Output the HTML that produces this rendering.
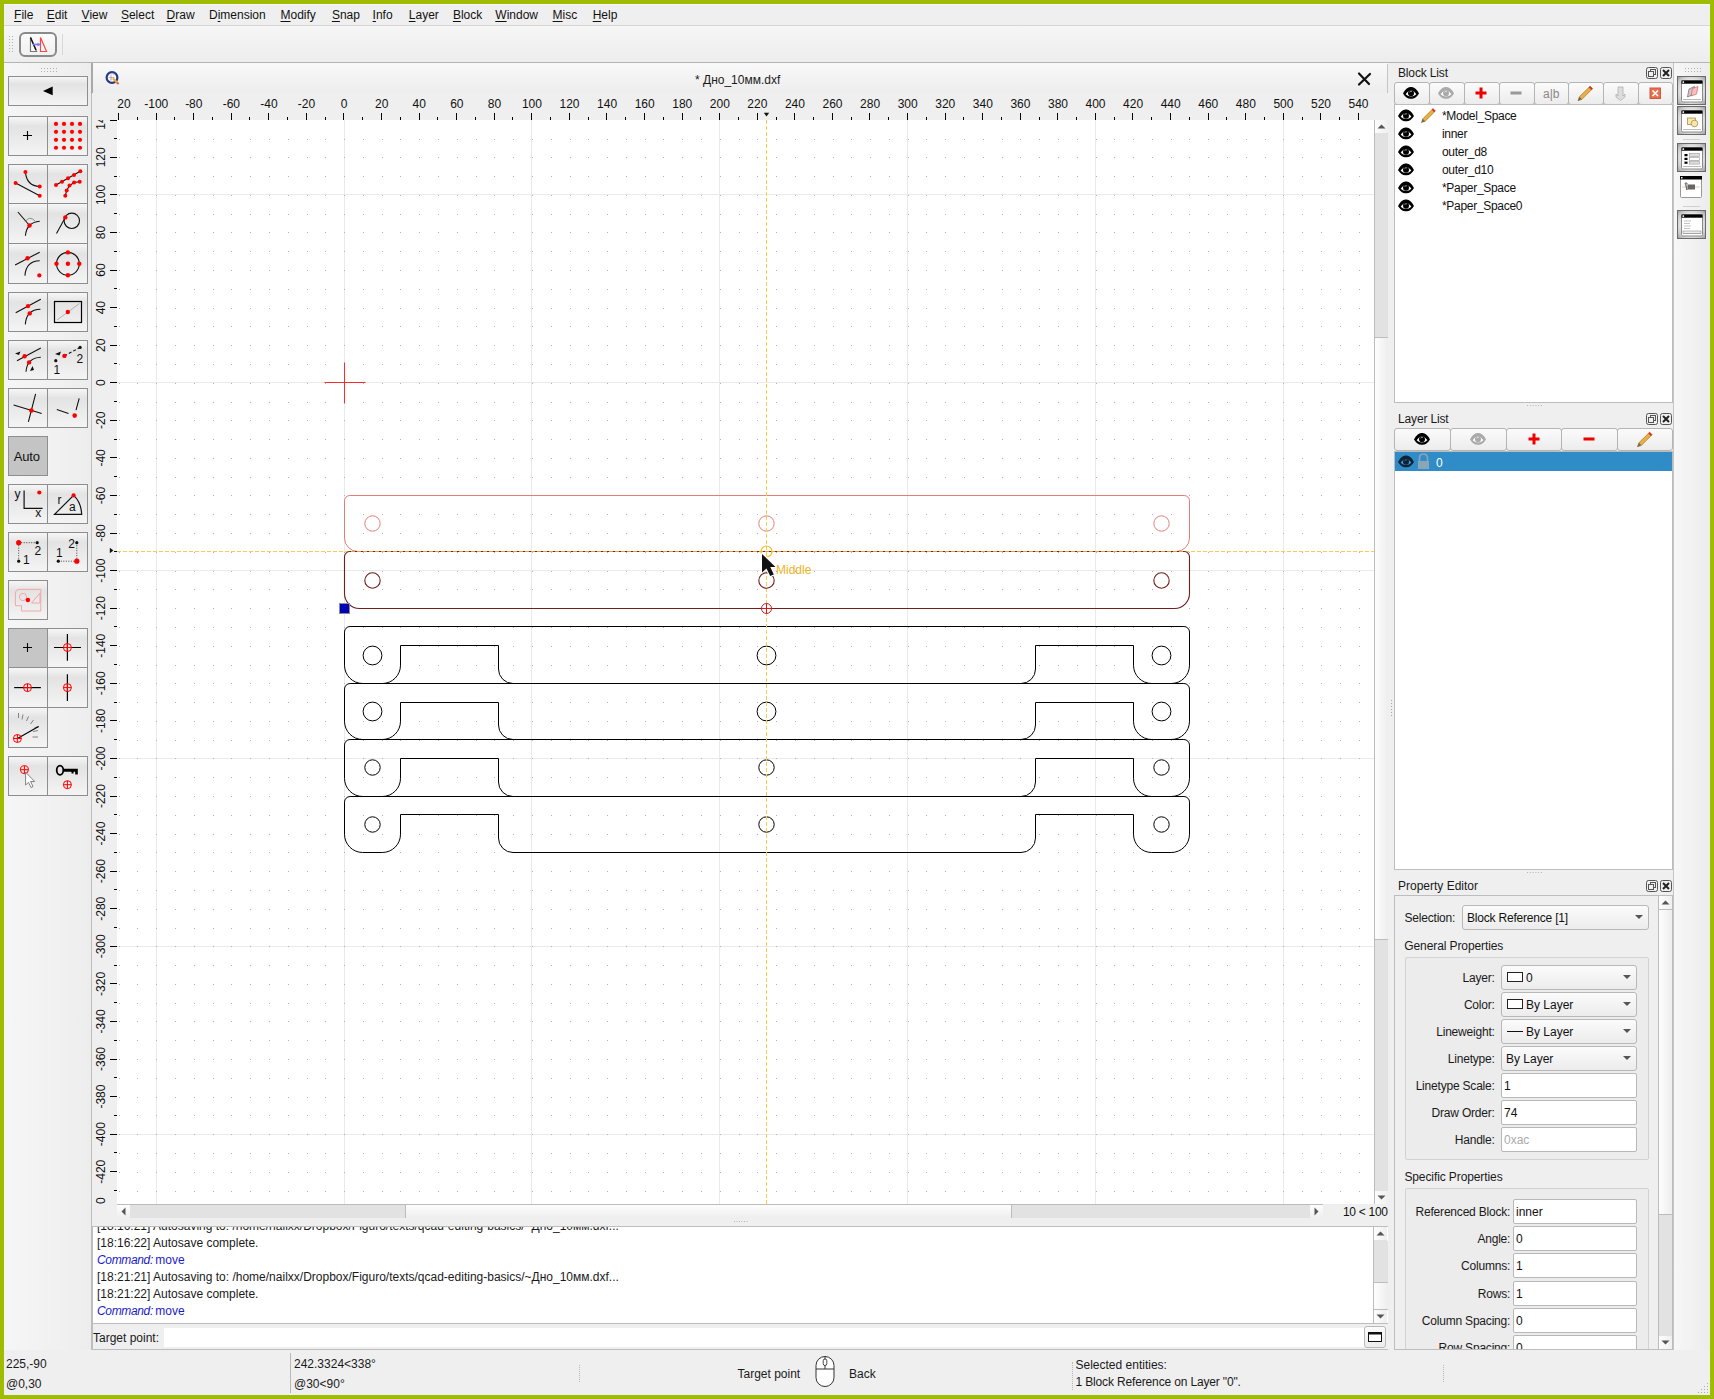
<!DOCTYPE html><html><head><meta charset="utf-8"><style>
*{box-sizing:border-box}
html,body{margin:0;padding:0}
body{width:1714px;height:1399px;overflow:hidden;position:relative;background:#a0bc00;font-family:"Liberation Sans",sans-serif;font-size:12px;color:#1a1a1a}
.a{position:absolute}
.t{position:absolute;white-space:nowrap;line-height:14px}
.u{text-decoration:underline;text-underline-offset:2px}
.tb{position:absolute;border:1px solid #8e8e8e;background:linear-gradient(#f6f6f6,#e3e3e3 25%,#ebebeb 60%,#f4f4f4)}
.tbp{position:absolute;border:1px solid #8e8e8e;background:#c6c6c6}
.btn{position:absolute;border:1px solid #b9b9b9;border-radius:3px;background:linear-gradient(#fbfbfb,#ececec)}
.inp{position:absolute;border:1px solid #b9b9b9;border-radius:2px;background:#fff}
svg{position:absolute;overflow:visible}
</style></head><body>
<div class="a" style="left:4px;top:4px;width:1706px;height:1391px;background:#efefef"></div>
<div class="a" style="left:4px;top:4px;width:1706px;height:1px;background:#f7f7f9"></div>
<div class="t" style="left:14.1px;top:8px;color:#111"><span class="u">F</span>ile</div>
<div class="t" style="left:46.7px;top:8px;color:#111"><span class="u">E</span>dit</div>
<div class="t" style="left:81.6px;top:8px;color:#111"><span class="u">V</span>iew</div>
<div class="t" style="left:120.9px;top:8px;color:#111"><span class="u">S</span>elect</div>
<div class="t" style="left:166.6px;top:8px;color:#111"><span class="u">D</span>raw</div>
<div class="t" style="left:209px;top:8px;color:#111">D<span class="u">i</span>mension</div>
<div class="t" style="left:280.5px;top:8px;color:#111"><span class="u">M</span>odify</div>
<div class="t" style="left:331.9px;top:8px;color:#111"><span class="u">S</span>nap</div>
<div class="t" style="left:372.6px;top:8px;color:#111"><span class="u">I</span>nfo</div>
<div class="t" style="left:408.8px;top:8px;color:#111"><span class="u">L</span>ayer</div>
<div class="t" style="left:452.9px;top:8px;color:#111"><span class="u">B</span>lock</div>
<div class="t" style="left:495.3px;top:8px;color:#111"><span class="u">W</span>indow</div>
<div class="t" style="left:552.6px;top:8px;color:#111"><span class="u">M</span>isc</div>
<div class="t" style="left:592.7px;top:8px;color:#111"><span class="u">H</span>elp</div>
<div class="a" style="left:4px;top:25px;width:1706px;height:1px;background:#d6d6d6"></div>
<div class="a" style="left:4px;top:26px;width:1706px;height:36px;background:linear-gradient(#f6f6f6,#ededed)"></div>
<div class="a" style="left:4px;top:62px;width:1706px;height:1px;background:#b4b4b4"></div>
<div class="a" style="left:4px;top:63px;width:87px;height:1287px;background:linear-gradient(90deg,#f6f6f6,#ededed)"></div>
<div class="a" style="left:91px;top:63px;width:1px;height:1287px;background:#bdbdbd"></div>
<div class="a" style="left:92px;top:63px;width:1296px;height:30px;background:linear-gradient(#f9f9f9,#ededed)"></div>
<div class="a" style="left:1387px;top:64px;width:1px;height:30px;background:#c4c4c4"></div>
<div class="a" style="left:91px;top:63px;width:2px;height:31px;background:#a9a9a9"></div>
<div class="t" style="left:695px;top:73px;color:#1a1a1a">* Дно_10мм.dxf</div>
<svg style="left:1356px;top:71px" width="17" height="16" viewBox="0 0 17 16"><path d="M3 2.5 L13 13 M14 3 L3 13.5" stroke="#111" stroke-width="2.2" stroke-linecap="round" fill="none"/></svg>
<svg style="left:104px;top:69px" width="18" height="18" viewBox="0 0 18 18"><circle cx="8" cy="8.5" r="5.4" fill="#fafafa" stroke="#26388a" stroke-width="2.2"/><path d="M4.5 8.5h6M7 5.5v6" stroke="#999" stroke-width="0.7"/><path d="M6 11.5l2-2M9 6l1.5-1" stroke="#e88" stroke-width="0.7"/><path d="M9 9.5L13.2 13.7" stroke="#f0b020" stroke-width="2.2"/><path d="M12.8 13.3L14.6 15.1" stroke="#e06060" stroke-width="2"/></svg>
<div class="a" style="left:92px;top:93px;width:1296px;height:27px;background:#efefef"></div>
<div class="a" style="left:92px;top:120px;width:25px;height:1084px;background:#efefef"></div>
<svg style="left:117px;top:93px;overflow:hidden;" width="1271" height="27" viewBox="117 93 1271 27"><path d="M118.5 113V120M137.5 117V120M156.5 113V120M174.5 117V120M193.5 113V120M212.5 117V120M231.5 113V120M249.5 117V120M268.5 113V120M287.5 117V120M306.5 113V120M325.5 117V120M343.5 113V120M362.5 117V120M381.5 113V120M400.5 117V120M419.5 113V120M437.5 117V120M456.5 113V120M475.5 117V120M494.5 113V120M512.5 117V120M531.5 113V120M550.5 117V120M569.5 113V120M588.5 117V120M606.5 113V120M625.5 117V120M644.5 113V120M663.5 117V120M682.5 113V120M700.5 117V120M719.5 113V120M738.5 117V120M757.5 113V120M776.5 117V120M794.5 113V120M813.5 117V120M832.5 113V120M851.5 117V120M869.5 113V120M888.5 117V120M907.5 113V120M926.5 117V120M945.5 113V120M963.5 117V120M982.5 113V120M1001.5 117V120M1020.5 113V120M1039.5 117V120M1057.5 113V120M1076.5 117V120M1095.5 113V120M1114.5 117V120M1132.5 113V120M1151.5 117V120M1170.5 113V120M1189.5 117V120M1208.5 113V120M1226.5 117V120M1245.5 113V120M1264.5 117V120M1283.5 113V120M1302.5 117V120M1320.5 113V120M1339.5 117V120M1358.5 113V120" stroke="#000" stroke-width="1" fill="none"/><g font-family="Liberation Sans" font-size="12" fill="#111"><text x="118.67" y="108" text-anchor="middle">-120</text><text x="156.24" y="108" text-anchor="middle">-100</text><text x="193.81" y="108" text-anchor="middle">-80</text><text x="231.38" y="108" text-anchor="middle">-60</text><text x="268.96" y="108" text-anchor="middle">-40</text><text x="306.53" y="108" text-anchor="middle">-20</text><text x="344.1" y="108" text-anchor="middle">0</text><text x="381.67" y="108" text-anchor="middle">20</text><text x="419.24" y="108" text-anchor="middle">40</text><text x="456.82" y="108" text-anchor="middle">60</text><text x="494.39" y="108" text-anchor="middle">80</text><text x="531.96" y="108" text-anchor="middle">100</text><text x="569.53" y="108" text-anchor="middle">120</text><text x="607.1" y="108" text-anchor="middle">140</text><text x="644.68" y="108" text-anchor="middle">160</text><text x="682.25" y="108" text-anchor="middle">180</text><text x="719.82" y="108" text-anchor="middle">200</text><text x="757.39" y="108" text-anchor="middle">220</text><text x="794.96" y="108" text-anchor="middle">240</text><text x="832.54" y="108" text-anchor="middle">260</text><text x="870.11" y="108" text-anchor="middle">280</text><text x="907.68" y="108" text-anchor="middle">300</text><text x="945.25" y="108" text-anchor="middle">320</text><text x="982.82" y="108" text-anchor="middle">340</text><text x="1020.4" y="108" text-anchor="middle">360</text><text x="1057.97" y="108" text-anchor="middle">380</text><text x="1095.54" y="108" text-anchor="middle">400</text><text x="1133.11" y="108" text-anchor="middle">420</text><text x="1170.68" y="108" text-anchor="middle">440</text><text x="1208.26" y="108" text-anchor="middle">460</text><text x="1245.83" y="108" text-anchor="middle">480</text><text x="1283.4" y="108" text-anchor="middle">500</text><text x="1320.97" y="108" text-anchor="middle">520</text><text x="1358.54" y="108" text-anchor="middle">540</text></g><path d="M763.8 112.8 h5.4 l-2.7 3.6z" fill="#111"/></svg>
<svg style="left:92px;top:120px;overflow:hidden;" width="25" height="1084" viewBox="92 120 25 1084"><path d="M110 120.5H117M114 138.5H117M110 157.5H117M114 176.5H117M110 194.5H117M114 213.5H117M110 232.5H117M114 251.5H117M110 270.5H117M114 288.5H117M110 307.5H117M114 326.5H117M110 345.5H117M114 363.5H117M110 382.5H117M114 401.5H117M110 420.5H117M114 439.5H117M110 457.5H117M114 476.5H117M110 495.5H117M114 514.5H117M110 533.5H117M114 551.5H117M110 570.5H117M114 589.5H117M110 608.5H117M114 626.5H117M110 645.5H117M114 664.5H117M110 683.5H117M114 702.5H117M110 720.5H117M114 739.5H117M110 758.5H117M114 777.5H117M110 796.5H117M114 814.5H117M110 833.5H117M114 852.5H117M110 871.5H117M114 889.5H117M110 908.5H117M114 927.5H117M110 946.5H117M114 965.5H117M110 983.5H117M114 1002.5H117M110 1021.5H117M114 1040.5H117M110 1059.5H117M114 1077.5H117M110 1096.5H117M114 1115.5H117M110 1134.5H117M114 1152.5H117M110 1171.5H117M114 1190.5H117" stroke="#000" stroke-width="1" fill="none"/><g font-family="Liberation Sans" font-size="12" fill="#111"><text x="105" y="119.77" transform="rotate(-90 105 119.77)" text-anchor="middle">140</text><text x="105" y="157.34" transform="rotate(-90 105 157.34)" text-anchor="middle">120</text><text x="105" y="194.91" transform="rotate(-90 105 194.91)" text-anchor="middle">100</text><text x="105" y="232.48" transform="rotate(-90 105 232.48)" text-anchor="middle">80</text><text x="105" y="270.05" transform="rotate(-90 105 270.05)" text-anchor="middle">60</text><text x="105" y="307.62" transform="rotate(-90 105 307.62)" text-anchor="middle">40</text><text x="105" y="345.19" transform="rotate(-90 105 345.19)" text-anchor="middle">20</text><text x="105" y="382.76" transform="rotate(-90 105 382.76)" text-anchor="middle">0</text><text x="105" y="420.33" transform="rotate(-90 105 420.33)" text-anchor="middle">-20</text><text x="105" y="457.9" transform="rotate(-90 105 457.9)" text-anchor="middle">-40</text><text x="105" y="495.47" transform="rotate(-90 105 495.47)" text-anchor="middle">-60</text><text x="105" y="533.04" transform="rotate(-90 105 533.04)" text-anchor="middle">-80</text><text x="105" y="570.61" transform="rotate(-90 105 570.61)" text-anchor="middle">-100</text><text x="105" y="608.18" transform="rotate(-90 105 608.18)" text-anchor="middle">-120</text><text x="105" y="645.75" transform="rotate(-90 105 645.75)" text-anchor="middle">-140</text><text x="105" y="683.32" transform="rotate(-90 105 683.32)" text-anchor="middle">-160</text><text x="105" y="720.89" transform="rotate(-90 105 720.89)" text-anchor="middle">-180</text><text x="105" y="758.46" transform="rotate(-90 105 758.46)" text-anchor="middle">-200</text><text x="105" y="796.03" transform="rotate(-90 105 796.03)" text-anchor="middle">-220</text><text x="105" y="833.6" transform="rotate(-90 105 833.6)" text-anchor="middle">-240</text><text x="105" y="871.17" transform="rotate(-90 105 871.17)" text-anchor="middle">-260</text><text x="105" y="908.74" transform="rotate(-90 105 908.74)" text-anchor="middle">-280</text><text x="105" y="946.31" transform="rotate(-90 105 946.31)" text-anchor="middle">-300</text><text x="105" y="983.88" transform="rotate(-90 105 983.88)" text-anchor="middle">-320</text><text x="105" y="1021.45" transform="rotate(-90 105 1021.45)" text-anchor="middle">-340</text><text x="105" y="1059.02" transform="rotate(-90 105 1059.02)" text-anchor="middle">-360</text><text x="105" y="1096.59" transform="rotate(-90 105 1096.59)" text-anchor="middle">-380</text><text x="105" y="1134.16" transform="rotate(-90 105 1134.16)" text-anchor="middle">-400</text><text x="105" y="1171.73" transform="rotate(-90 105 1171.73)" text-anchor="middle">-420</text><text x="105" y="1209.3" transform="rotate(-90 105 1209.3)" text-anchor="middle">-440</text></g><path d="M109.8 547.8 v5.4 l3.6 -2.7z" fill="#111"/></svg>
<svg style="left:117px;top:120px;overflow:hidden;" width="1257" height="1084" viewBox="117 120 1257 1084"><rect x="117" y="120" width="1257" height="1084" fill="#fff"/><path d="M156.5 120V1204M344.5 120V1204M531.5 120V1204M719.5 120V1204M907.5 120V1204M1095.5 120V1204M1283.5 120V1204M117 194.5H1374M117 382.5H1374M117 570.5H1374M117 758.5H1374M117 946.5H1374M117 1134.5H1374" stroke="#eaeaea" stroke-width="1" fill="none"/><path d="M119 139h1v1h-1zM137 139h1v1h-1zM156 139h1v1h-1zM175 139h1v1h-1zM194 139h1v1h-1zM213 139h1v1h-1zM231 139h1v1h-1zM250 139h1v1h-1zM269 139h1v1h-1zM288 139h1v1h-1zM307 139h1v1h-1zM325 139h1v1h-1zM344 139h1v1h-1zM363 139h1v1h-1zM382 139h1v1h-1zM400 139h1v1h-1zM419 139h1v1h-1zM438 139h1v1h-1zM457 139h1v1h-1zM476 139h1v1h-1zM494 139h1v1h-1zM513 139h1v1h-1zM532 139h1v1h-1zM551 139h1v1h-1zM570 139h1v1h-1zM588 139h1v1h-1zM607 139h1v1h-1zM626 139h1v1h-1zM645 139h1v1h-1zM663 139h1v1h-1zM682 139h1v1h-1zM701 139h1v1h-1zM720 139h1v1h-1zM739 139h1v1h-1zM757 139h1v1h-1zM776 139h1v1h-1zM795 139h1v1h-1zM814 139h1v1h-1zM833 139h1v1h-1zM851 139h1v1h-1zM870 139h1v1h-1zM889 139h1v1h-1zM908 139h1v1h-1zM926 139h1v1h-1zM945 139h1v1h-1zM964 139h1v1h-1zM983 139h1v1h-1zM1002 139h1v1h-1zM1020 139h1v1h-1zM1039 139h1v1h-1zM1058 139h1v1h-1zM1077 139h1v1h-1zM1096 139h1v1h-1zM1114 139h1v1h-1zM1133 139h1v1h-1zM1152 139h1v1h-1zM1171 139h1v1h-1zM1189 139h1v1h-1zM1208 139h1v1h-1zM1227 139h1v1h-1zM1246 139h1v1h-1zM1265 139h1v1h-1zM1283 139h1v1h-1zM1302 139h1v1h-1zM1321 139h1v1h-1zM1340 139h1v1h-1zM1359 139h1v1h-1zM119 157h1v1h-1zM137 157h1v1h-1zM156 157h1v1h-1zM175 157h1v1h-1zM194 157h1v1h-1zM213 157h1v1h-1zM231 157h1v1h-1zM250 157h1v1h-1zM269 157h1v1h-1zM288 157h1v1h-1zM307 157h1v1h-1zM325 157h1v1h-1zM344 157h1v1h-1zM363 157h1v1h-1zM382 157h1v1h-1zM400 157h1v1h-1zM419 157h1v1h-1zM438 157h1v1h-1zM457 157h1v1h-1zM476 157h1v1h-1zM494 157h1v1h-1zM513 157h1v1h-1zM532 157h1v1h-1zM551 157h1v1h-1zM570 157h1v1h-1zM588 157h1v1h-1zM607 157h1v1h-1zM626 157h1v1h-1zM645 157h1v1h-1zM663 157h1v1h-1zM682 157h1v1h-1zM701 157h1v1h-1zM720 157h1v1h-1zM739 157h1v1h-1zM757 157h1v1h-1zM776 157h1v1h-1zM795 157h1v1h-1zM814 157h1v1h-1zM833 157h1v1h-1zM851 157h1v1h-1zM870 157h1v1h-1zM889 157h1v1h-1zM908 157h1v1h-1zM926 157h1v1h-1zM945 157h1v1h-1zM964 157h1v1h-1zM983 157h1v1h-1zM1002 157h1v1h-1zM1020 157h1v1h-1zM1039 157h1v1h-1zM1058 157h1v1h-1zM1077 157h1v1h-1zM1096 157h1v1h-1zM1114 157h1v1h-1zM1133 157h1v1h-1zM1152 157h1v1h-1zM1171 157h1v1h-1zM1189 157h1v1h-1zM1208 157h1v1h-1zM1227 157h1v1h-1zM1246 157h1v1h-1zM1265 157h1v1h-1zM1283 157h1v1h-1zM1302 157h1v1h-1zM1321 157h1v1h-1zM1340 157h1v1h-1zM1359 157h1v1h-1zM119 176h1v1h-1zM137 176h1v1h-1zM156 176h1v1h-1zM175 176h1v1h-1zM194 176h1v1h-1zM213 176h1v1h-1zM231 176h1v1h-1zM250 176h1v1h-1zM269 176h1v1h-1zM288 176h1v1h-1zM307 176h1v1h-1zM325 176h1v1h-1zM344 176h1v1h-1zM363 176h1v1h-1zM382 176h1v1h-1zM400 176h1v1h-1zM419 176h1v1h-1zM438 176h1v1h-1zM457 176h1v1h-1zM476 176h1v1h-1zM494 176h1v1h-1zM513 176h1v1h-1zM532 176h1v1h-1zM551 176h1v1h-1zM570 176h1v1h-1zM588 176h1v1h-1zM607 176h1v1h-1zM626 176h1v1h-1zM645 176h1v1h-1zM663 176h1v1h-1zM682 176h1v1h-1zM701 176h1v1h-1zM720 176h1v1h-1zM739 176h1v1h-1zM757 176h1v1h-1zM776 176h1v1h-1zM795 176h1v1h-1zM814 176h1v1h-1zM833 176h1v1h-1zM851 176h1v1h-1zM870 176h1v1h-1zM889 176h1v1h-1zM908 176h1v1h-1zM926 176h1v1h-1zM945 176h1v1h-1zM964 176h1v1h-1zM983 176h1v1h-1zM1002 176h1v1h-1zM1020 176h1v1h-1zM1039 176h1v1h-1zM1058 176h1v1h-1zM1077 176h1v1h-1zM1096 176h1v1h-1zM1114 176h1v1h-1zM1133 176h1v1h-1zM1152 176h1v1h-1zM1171 176h1v1h-1zM1189 176h1v1h-1zM1208 176h1v1h-1zM1227 176h1v1h-1zM1246 176h1v1h-1zM1265 176h1v1h-1zM1283 176h1v1h-1zM1302 176h1v1h-1zM1321 176h1v1h-1zM1340 176h1v1h-1zM1359 176h1v1h-1zM119 195h1v1h-1zM137 195h1v1h-1zM156 195h1v1h-1zM175 195h1v1h-1zM194 195h1v1h-1zM213 195h1v1h-1zM231 195h1v1h-1zM250 195h1v1h-1zM269 195h1v1h-1zM288 195h1v1h-1zM307 195h1v1h-1zM325 195h1v1h-1zM344 195h1v1h-1zM363 195h1v1h-1zM382 195h1v1h-1zM400 195h1v1h-1zM419 195h1v1h-1zM438 195h1v1h-1zM457 195h1v1h-1zM476 195h1v1h-1zM494 195h1v1h-1zM513 195h1v1h-1zM532 195h1v1h-1zM551 195h1v1h-1zM570 195h1v1h-1zM588 195h1v1h-1zM607 195h1v1h-1zM626 195h1v1h-1zM645 195h1v1h-1zM663 195h1v1h-1zM682 195h1v1h-1zM701 195h1v1h-1zM720 195h1v1h-1zM739 195h1v1h-1zM757 195h1v1h-1zM776 195h1v1h-1zM795 195h1v1h-1zM814 195h1v1h-1zM833 195h1v1h-1zM851 195h1v1h-1zM870 195h1v1h-1zM889 195h1v1h-1zM908 195h1v1h-1zM926 195h1v1h-1zM945 195h1v1h-1zM964 195h1v1h-1zM983 195h1v1h-1zM1002 195h1v1h-1zM1020 195h1v1h-1zM1039 195h1v1h-1zM1058 195h1v1h-1zM1077 195h1v1h-1zM1096 195h1v1h-1zM1114 195h1v1h-1zM1133 195h1v1h-1zM1152 195h1v1h-1zM1171 195h1v1h-1zM1189 195h1v1h-1zM1208 195h1v1h-1zM1227 195h1v1h-1zM1246 195h1v1h-1zM1265 195h1v1h-1zM1283 195h1v1h-1zM1302 195h1v1h-1zM1321 195h1v1h-1zM1340 195h1v1h-1zM1359 195h1v1h-1zM119 214h1v1h-1zM137 214h1v1h-1zM156 214h1v1h-1zM175 214h1v1h-1zM194 214h1v1h-1zM213 214h1v1h-1zM231 214h1v1h-1zM250 214h1v1h-1zM269 214h1v1h-1zM288 214h1v1h-1zM307 214h1v1h-1zM325 214h1v1h-1zM344 214h1v1h-1zM363 214h1v1h-1zM382 214h1v1h-1zM400 214h1v1h-1zM419 214h1v1h-1zM438 214h1v1h-1zM457 214h1v1h-1zM476 214h1v1h-1zM494 214h1v1h-1zM513 214h1v1h-1zM532 214h1v1h-1zM551 214h1v1h-1zM570 214h1v1h-1zM588 214h1v1h-1zM607 214h1v1h-1zM626 214h1v1h-1zM645 214h1v1h-1zM663 214h1v1h-1zM682 214h1v1h-1zM701 214h1v1h-1zM720 214h1v1h-1zM739 214h1v1h-1zM757 214h1v1h-1zM776 214h1v1h-1zM795 214h1v1h-1zM814 214h1v1h-1zM833 214h1v1h-1zM851 214h1v1h-1zM870 214h1v1h-1zM889 214h1v1h-1zM908 214h1v1h-1zM926 214h1v1h-1zM945 214h1v1h-1zM964 214h1v1h-1zM983 214h1v1h-1zM1002 214h1v1h-1zM1020 214h1v1h-1zM1039 214h1v1h-1zM1058 214h1v1h-1zM1077 214h1v1h-1zM1096 214h1v1h-1zM1114 214h1v1h-1zM1133 214h1v1h-1zM1152 214h1v1h-1zM1171 214h1v1h-1zM1189 214h1v1h-1zM1208 214h1v1h-1zM1227 214h1v1h-1zM1246 214h1v1h-1zM1265 214h1v1h-1zM1283 214h1v1h-1zM1302 214h1v1h-1zM1321 214h1v1h-1zM1340 214h1v1h-1zM1359 214h1v1h-1zM119 232h1v1h-1zM137 232h1v1h-1zM156 232h1v1h-1zM175 232h1v1h-1zM194 232h1v1h-1zM213 232h1v1h-1zM231 232h1v1h-1zM250 232h1v1h-1zM269 232h1v1h-1zM288 232h1v1h-1zM307 232h1v1h-1zM325 232h1v1h-1zM344 232h1v1h-1zM363 232h1v1h-1zM382 232h1v1h-1zM400 232h1v1h-1zM419 232h1v1h-1zM438 232h1v1h-1zM457 232h1v1h-1zM476 232h1v1h-1zM494 232h1v1h-1zM513 232h1v1h-1zM532 232h1v1h-1zM551 232h1v1h-1zM570 232h1v1h-1zM588 232h1v1h-1zM607 232h1v1h-1zM626 232h1v1h-1zM645 232h1v1h-1zM663 232h1v1h-1zM682 232h1v1h-1zM701 232h1v1h-1zM720 232h1v1h-1zM739 232h1v1h-1zM757 232h1v1h-1zM776 232h1v1h-1zM795 232h1v1h-1zM814 232h1v1h-1zM833 232h1v1h-1zM851 232h1v1h-1zM870 232h1v1h-1zM889 232h1v1h-1zM908 232h1v1h-1zM926 232h1v1h-1zM945 232h1v1h-1zM964 232h1v1h-1zM983 232h1v1h-1zM1002 232h1v1h-1zM1020 232h1v1h-1zM1039 232h1v1h-1zM1058 232h1v1h-1zM1077 232h1v1h-1zM1096 232h1v1h-1zM1114 232h1v1h-1zM1133 232h1v1h-1zM1152 232h1v1h-1zM1171 232h1v1h-1zM1189 232h1v1h-1zM1208 232h1v1h-1zM1227 232h1v1h-1zM1246 232h1v1h-1zM1265 232h1v1h-1zM1283 232h1v1h-1zM1302 232h1v1h-1zM1321 232h1v1h-1zM1340 232h1v1h-1zM1359 232h1v1h-1zM119 251h1v1h-1zM137 251h1v1h-1zM156 251h1v1h-1zM175 251h1v1h-1zM194 251h1v1h-1zM213 251h1v1h-1zM231 251h1v1h-1zM250 251h1v1h-1zM269 251h1v1h-1zM288 251h1v1h-1zM307 251h1v1h-1zM325 251h1v1h-1zM344 251h1v1h-1zM363 251h1v1h-1zM382 251h1v1h-1zM400 251h1v1h-1zM419 251h1v1h-1zM438 251h1v1h-1zM457 251h1v1h-1zM476 251h1v1h-1zM494 251h1v1h-1zM513 251h1v1h-1zM532 251h1v1h-1zM551 251h1v1h-1zM570 251h1v1h-1zM588 251h1v1h-1zM607 251h1v1h-1zM626 251h1v1h-1zM645 251h1v1h-1zM663 251h1v1h-1zM682 251h1v1h-1zM701 251h1v1h-1zM720 251h1v1h-1zM739 251h1v1h-1zM757 251h1v1h-1zM776 251h1v1h-1zM795 251h1v1h-1zM814 251h1v1h-1zM833 251h1v1h-1zM851 251h1v1h-1zM870 251h1v1h-1zM889 251h1v1h-1zM908 251h1v1h-1zM926 251h1v1h-1zM945 251h1v1h-1zM964 251h1v1h-1zM983 251h1v1h-1zM1002 251h1v1h-1zM1020 251h1v1h-1zM1039 251h1v1h-1zM1058 251h1v1h-1zM1077 251h1v1h-1zM1096 251h1v1h-1zM1114 251h1v1h-1zM1133 251h1v1h-1zM1152 251h1v1h-1zM1171 251h1v1h-1zM1189 251h1v1h-1zM1208 251h1v1h-1zM1227 251h1v1h-1zM1246 251h1v1h-1zM1265 251h1v1h-1zM1283 251h1v1h-1zM1302 251h1v1h-1zM1321 251h1v1h-1zM1340 251h1v1h-1zM1359 251h1v1h-1zM119 270h1v1h-1zM137 270h1v1h-1zM156 270h1v1h-1zM175 270h1v1h-1zM194 270h1v1h-1zM213 270h1v1h-1zM231 270h1v1h-1zM250 270h1v1h-1zM269 270h1v1h-1zM288 270h1v1h-1zM307 270h1v1h-1zM325 270h1v1h-1zM344 270h1v1h-1zM363 270h1v1h-1zM382 270h1v1h-1zM400 270h1v1h-1zM419 270h1v1h-1zM438 270h1v1h-1zM457 270h1v1h-1zM476 270h1v1h-1zM494 270h1v1h-1zM513 270h1v1h-1zM532 270h1v1h-1zM551 270h1v1h-1zM570 270h1v1h-1zM588 270h1v1h-1zM607 270h1v1h-1zM626 270h1v1h-1zM645 270h1v1h-1zM663 270h1v1h-1zM682 270h1v1h-1zM701 270h1v1h-1zM720 270h1v1h-1zM739 270h1v1h-1zM757 270h1v1h-1zM776 270h1v1h-1zM795 270h1v1h-1zM814 270h1v1h-1zM833 270h1v1h-1zM851 270h1v1h-1zM870 270h1v1h-1zM889 270h1v1h-1zM908 270h1v1h-1zM926 270h1v1h-1zM945 270h1v1h-1zM964 270h1v1h-1zM983 270h1v1h-1zM1002 270h1v1h-1zM1020 270h1v1h-1zM1039 270h1v1h-1zM1058 270h1v1h-1zM1077 270h1v1h-1zM1096 270h1v1h-1zM1114 270h1v1h-1zM1133 270h1v1h-1zM1152 270h1v1h-1zM1171 270h1v1h-1zM1189 270h1v1h-1zM1208 270h1v1h-1zM1227 270h1v1h-1zM1246 270h1v1h-1zM1265 270h1v1h-1zM1283 270h1v1h-1zM1302 270h1v1h-1zM1321 270h1v1h-1zM1340 270h1v1h-1zM1359 270h1v1h-1zM119 289h1v1h-1zM137 289h1v1h-1zM156 289h1v1h-1zM175 289h1v1h-1zM194 289h1v1h-1zM213 289h1v1h-1zM231 289h1v1h-1zM250 289h1v1h-1zM269 289h1v1h-1zM288 289h1v1h-1zM307 289h1v1h-1zM325 289h1v1h-1zM344 289h1v1h-1zM363 289h1v1h-1zM382 289h1v1h-1zM400 289h1v1h-1zM419 289h1v1h-1zM438 289h1v1h-1zM457 289h1v1h-1zM476 289h1v1h-1zM494 289h1v1h-1zM513 289h1v1h-1zM532 289h1v1h-1zM551 289h1v1h-1zM570 289h1v1h-1zM588 289h1v1h-1zM607 289h1v1h-1zM626 289h1v1h-1zM645 289h1v1h-1zM663 289h1v1h-1zM682 289h1v1h-1zM701 289h1v1h-1zM720 289h1v1h-1zM739 289h1v1h-1zM757 289h1v1h-1zM776 289h1v1h-1zM795 289h1v1h-1zM814 289h1v1h-1zM833 289h1v1h-1zM851 289h1v1h-1zM870 289h1v1h-1zM889 289h1v1h-1zM908 289h1v1h-1zM926 289h1v1h-1zM945 289h1v1h-1zM964 289h1v1h-1zM983 289h1v1h-1zM1002 289h1v1h-1zM1020 289h1v1h-1zM1039 289h1v1h-1zM1058 289h1v1h-1zM1077 289h1v1h-1zM1096 289h1v1h-1zM1114 289h1v1h-1zM1133 289h1v1h-1zM1152 289h1v1h-1zM1171 289h1v1h-1zM1189 289h1v1h-1zM1208 289h1v1h-1zM1227 289h1v1h-1zM1246 289h1v1h-1zM1265 289h1v1h-1zM1283 289h1v1h-1zM1302 289h1v1h-1zM1321 289h1v1h-1zM1340 289h1v1h-1zM1359 289h1v1h-1zM119 308h1v1h-1zM137 308h1v1h-1zM156 308h1v1h-1zM175 308h1v1h-1zM194 308h1v1h-1zM213 308h1v1h-1zM231 308h1v1h-1zM250 308h1v1h-1zM269 308h1v1h-1zM288 308h1v1h-1zM307 308h1v1h-1zM325 308h1v1h-1zM344 308h1v1h-1zM363 308h1v1h-1zM382 308h1v1h-1zM400 308h1v1h-1zM419 308h1v1h-1zM438 308h1v1h-1zM457 308h1v1h-1zM476 308h1v1h-1zM494 308h1v1h-1zM513 308h1v1h-1zM532 308h1v1h-1zM551 308h1v1h-1zM570 308h1v1h-1zM588 308h1v1h-1zM607 308h1v1h-1zM626 308h1v1h-1zM645 308h1v1h-1zM663 308h1v1h-1zM682 308h1v1h-1zM701 308h1v1h-1zM720 308h1v1h-1zM739 308h1v1h-1zM757 308h1v1h-1zM776 308h1v1h-1zM795 308h1v1h-1zM814 308h1v1h-1zM833 308h1v1h-1zM851 308h1v1h-1zM870 308h1v1h-1zM889 308h1v1h-1zM908 308h1v1h-1zM926 308h1v1h-1zM945 308h1v1h-1zM964 308h1v1h-1zM983 308h1v1h-1zM1002 308h1v1h-1zM1020 308h1v1h-1zM1039 308h1v1h-1zM1058 308h1v1h-1zM1077 308h1v1h-1zM1096 308h1v1h-1zM1114 308h1v1h-1zM1133 308h1v1h-1zM1152 308h1v1h-1zM1171 308h1v1h-1zM1189 308h1v1h-1zM1208 308h1v1h-1zM1227 308h1v1h-1zM1246 308h1v1h-1zM1265 308h1v1h-1zM1283 308h1v1h-1zM1302 308h1v1h-1zM1321 308h1v1h-1zM1340 308h1v1h-1zM1359 308h1v1h-1zM119 326h1v1h-1zM137 326h1v1h-1zM156 326h1v1h-1zM175 326h1v1h-1zM194 326h1v1h-1zM213 326h1v1h-1zM231 326h1v1h-1zM250 326h1v1h-1zM269 326h1v1h-1zM288 326h1v1h-1zM307 326h1v1h-1zM325 326h1v1h-1zM344 326h1v1h-1zM363 326h1v1h-1zM382 326h1v1h-1zM400 326h1v1h-1zM419 326h1v1h-1zM438 326h1v1h-1zM457 326h1v1h-1zM476 326h1v1h-1zM494 326h1v1h-1zM513 326h1v1h-1zM532 326h1v1h-1zM551 326h1v1h-1zM570 326h1v1h-1zM588 326h1v1h-1zM607 326h1v1h-1zM626 326h1v1h-1zM645 326h1v1h-1zM663 326h1v1h-1zM682 326h1v1h-1zM701 326h1v1h-1zM720 326h1v1h-1zM739 326h1v1h-1zM757 326h1v1h-1zM776 326h1v1h-1zM795 326h1v1h-1zM814 326h1v1h-1zM833 326h1v1h-1zM851 326h1v1h-1zM870 326h1v1h-1zM889 326h1v1h-1zM908 326h1v1h-1zM926 326h1v1h-1zM945 326h1v1h-1zM964 326h1v1h-1zM983 326h1v1h-1zM1002 326h1v1h-1zM1020 326h1v1h-1zM1039 326h1v1h-1zM1058 326h1v1h-1zM1077 326h1v1h-1zM1096 326h1v1h-1zM1114 326h1v1h-1zM1133 326h1v1h-1zM1152 326h1v1h-1zM1171 326h1v1h-1zM1189 326h1v1h-1zM1208 326h1v1h-1zM1227 326h1v1h-1zM1246 326h1v1h-1zM1265 326h1v1h-1zM1283 326h1v1h-1zM1302 326h1v1h-1zM1321 326h1v1h-1zM1340 326h1v1h-1zM1359 326h1v1h-1zM119 345h1v1h-1zM137 345h1v1h-1zM156 345h1v1h-1zM175 345h1v1h-1zM194 345h1v1h-1zM213 345h1v1h-1zM231 345h1v1h-1zM250 345h1v1h-1zM269 345h1v1h-1zM288 345h1v1h-1zM307 345h1v1h-1zM325 345h1v1h-1zM344 345h1v1h-1zM363 345h1v1h-1zM382 345h1v1h-1zM400 345h1v1h-1zM419 345h1v1h-1zM438 345h1v1h-1zM457 345h1v1h-1zM476 345h1v1h-1zM494 345h1v1h-1zM513 345h1v1h-1zM532 345h1v1h-1zM551 345h1v1h-1zM570 345h1v1h-1zM588 345h1v1h-1zM607 345h1v1h-1zM626 345h1v1h-1zM645 345h1v1h-1zM663 345h1v1h-1zM682 345h1v1h-1zM701 345h1v1h-1zM720 345h1v1h-1zM739 345h1v1h-1zM757 345h1v1h-1zM776 345h1v1h-1zM795 345h1v1h-1zM814 345h1v1h-1zM833 345h1v1h-1zM851 345h1v1h-1zM870 345h1v1h-1zM889 345h1v1h-1zM908 345h1v1h-1zM926 345h1v1h-1zM945 345h1v1h-1zM964 345h1v1h-1zM983 345h1v1h-1zM1002 345h1v1h-1zM1020 345h1v1h-1zM1039 345h1v1h-1zM1058 345h1v1h-1zM1077 345h1v1h-1zM1096 345h1v1h-1zM1114 345h1v1h-1zM1133 345h1v1h-1zM1152 345h1v1h-1zM1171 345h1v1h-1zM1189 345h1v1h-1zM1208 345h1v1h-1zM1227 345h1v1h-1zM1246 345h1v1h-1zM1265 345h1v1h-1zM1283 345h1v1h-1zM1302 345h1v1h-1zM1321 345h1v1h-1zM1340 345h1v1h-1zM1359 345h1v1h-1zM119 364h1v1h-1zM137 364h1v1h-1zM156 364h1v1h-1zM175 364h1v1h-1zM194 364h1v1h-1zM213 364h1v1h-1zM231 364h1v1h-1zM250 364h1v1h-1zM269 364h1v1h-1zM288 364h1v1h-1zM307 364h1v1h-1zM325 364h1v1h-1zM344 364h1v1h-1zM363 364h1v1h-1zM382 364h1v1h-1zM400 364h1v1h-1zM419 364h1v1h-1zM438 364h1v1h-1zM457 364h1v1h-1zM476 364h1v1h-1zM494 364h1v1h-1zM513 364h1v1h-1zM532 364h1v1h-1zM551 364h1v1h-1zM570 364h1v1h-1zM588 364h1v1h-1zM607 364h1v1h-1zM626 364h1v1h-1zM645 364h1v1h-1zM663 364h1v1h-1zM682 364h1v1h-1zM701 364h1v1h-1zM720 364h1v1h-1zM739 364h1v1h-1zM757 364h1v1h-1zM776 364h1v1h-1zM795 364h1v1h-1zM814 364h1v1h-1zM833 364h1v1h-1zM851 364h1v1h-1zM870 364h1v1h-1zM889 364h1v1h-1zM908 364h1v1h-1zM926 364h1v1h-1zM945 364h1v1h-1zM964 364h1v1h-1zM983 364h1v1h-1zM1002 364h1v1h-1zM1020 364h1v1h-1zM1039 364h1v1h-1zM1058 364h1v1h-1zM1077 364h1v1h-1zM1096 364h1v1h-1zM1114 364h1v1h-1zM1133 364h1v1h-1zM1152 364h1v1h-1zM1171 364h1v1h-1zM1189 364h1v1h-1zM1208 364h1v1h-1zM1227 364h1v1h-1zM1246 364h1v1h-1zM1265 364h1v1h-1zM1283 364h1v1h-1zM1302 364h1v1h-1zM1321 364h1v1h-1zM1340 364h1v1h-1zM1359 364h1v1h-1zM119 383h1v1h-1zM137 383h1v1h-1zM156 383h1v1h-1zM175 383h1v1h-1zM194 383h1v1h-1zM213 383h1v1h-1zM231 383h1v1h-1zM250 383h1v1h-1zM269 383h1v1h-1zM288 383h1v1h-1zM307 383h1v1h-1zM325 383h1v1h-1zM344 383h1v1h-1zM363 383h1v1h-1zM382 383h1v1h-1zM400 383h1v1h-1zM419 383h1v1h-1zM438 383h1v1h-1zM457 383h1v1h-1zM476 383h1v1h-1zM494 383h1v1h-1zM513 383h1v1h-1zM532 383h1v1h-1zM551 383h1v1h-1zM570 383h1v1h-1zM588 383h1v1h-1zM607 383h1v1h-1zM626 383h1v1h-1zM645 383h1v1h-1zM663 383h1v1h-1zM682 383h1v1h-1zM701 383h1v1h-1zM720 383h1v1h-1zM739 383h1v1h-1zM757 383h1v1h-1zM776 383h1v1h-1zM795 383h1v1h-1zM814 383h1v1h-1zM833 383h1v1h-1zM851 383h1v1h-1zM870 383h1v1h-1zM889 383h1v1h-1zM908 383h1v1h-1zM926 383h1v1h-1zM945 383h1v1h-1zM964 383h1v1h-1zM983 383h1v1h-1zM1002 383h1v1h-1zM1020 383h1v1h-1zM1039 383h1v1h-1zM1058 383h1v1h-1zM1077 383h1v1h-1zM1096 383h1v1h-1zM1114 383h1v1h-1zM1133 383h1v1h-1zM1152 383h1v1h-1zM1171 383h1v1h-1zM1189 383h1v1h-1zM1208 383h1v1h-1zM1227 383h1v1h-1zM1246 383h1v1h-1zM1265 383h1v1h-1zM1283 383h1v1h-1zM1302 383h1v1h-1zM1321 383h1v1h-1zM1340 383h1v1h-1zM1359 383h1v1h-1zM119 402h1v1h-1zM137 402h1v1h-1zM156 402h1v1h-1zM175 402h1v1h-1zM194 402h1v1h-1zM213 402h1v1h-1zM231 402h1v1h-1zM250 402h1v1h-1zM269 402h1v1h-1zM288 402h1v1h-1zM307 402h1v1h-1zM325 402h1v1h-1zM344 402h1v1h-1zM363 402h1v1h-1zM382 402h1v1h-1zM400 402h1v1h-1zM419 402h1v1h-1zM438 402h1v1h-1zM457 402h1v1h-1zM476 402h1v1h-1zM494 402h1v1h-1zM513 402h1v1h-1zM532 402h1v1h-1zM551 402h1v1h-1zM570 402h1v1h-1zM588 402h1v1h-1zM607 402h1v1h-1zM626 402h1v1h-1zM645 402h1v1h-1zM663 402h1v1h-1zM682 402h1v1h-1zM701 402h1v1h-1zM720 402h1v1h-1zM739 402h1v1h-1zM757 402h1v1h-1zM776 402h1v1h-1zM795 402h1v1h-1zM814 402h1v1h-1zM833 402h1v1h-1zM851 402h1v1h-1zM870 402h1v1h-1zM889 402h1v1h-1zM908 402h1v1h-1zM926 402h1v1h-1zM945 402h1v1h-1zM964 402h1v1h-1zM983 402h1v1h-1zM1002 402h1v1h-1zM1020 402h1v1h-1zM1039 402h1v1h-1zM1058 402h1v1h-1zM1077 402h1v1h-1zM1096 402h1v1h-1zM1114 402h1v1h-1zM1133 402h1v1h-1zM1152 402h1v1h-1zM1171 402h1v1h-1zM1189 402h1v1h-1zM1208 402h1v1h-1zM1227 402h1v1h-1zM1246 402h1v1h-1zM1265 402h1v1h-1zM1283 402h1v1h-1zM1302 402h1v1h-1zM1321 402h1v1h-1zM1340 402h1v1h-1zM1359 402h1v1h-1zM119 420h1v1h-1zM137 420h1v1h-1zM156 420h1v1h-1zM175 420h1v1h-1zM194 420h1v1h-1zM213 420h1v1h-1zM231 420h1v1h-1zM250 420h1v1h-1zM269 420h1v1h-1zM288 420h1v1h-1zM307 420h1v1h-1zM325 420h1v1h-1zM344 420h1v1h-1zM363 420h1v1h-1zM382 420h1v1h-1zM400 420h1v1h-1zM419 420h1v1h-1zM438 420h1v1h-1zM457 420h1v1h-1zM476 420h1v1h-1zM494 420h1v1h-1zM513 420h1v1h-1zM532 420h1v1h-1zM551 420h1v1h-1zM570 420h1v1h-1zM588 420h1v1h-1zM607 420h1v1h-1zM626 420h1v1h-1zM645 420h1v1h-1zM663 420h1v1h-1zM682 420h1v1h-1zM701 420h1v1h-1zM720 420h1v1h-1zM739 420h1v1h-1zM757 420h1v1h-1zM776 420h1v1h-1zM795 420h1v1h-1zM814 420h1v1h-1zM833 420h1v1h-1zM851 420h1v1h-1zM870 420h1v1h-1zM889 420h1v1h-1zM908 420h1v1h-1zM926 420h1v1h-1zM945 420h1v1h-1zM964 420h1v1h-1zM983 420h1v1h-1zM1002 420h1v1h-1zM1020 420h1v1h-1zM1039 420h1v1h-1zM1058 420h1v1h-1zM1077 420h1v1h-1zM1096 420h1v1h-1zM1114 420h1v1h-1zM1133 420h1v1h-1zM1152 420h1v1h-1zM1171 420h1v1h-1zM1189 420h1v1h-1zM1208 420h1v1h-1zM1227 420h1v1h-1zM1246 420h1v1h-1zM1265 420h1v1h-1zM1283 420h1v1h-1zM1302 420h1v1h-1zM1321 420h1v1h-1zM1340 420h1v1h-1zM1359 420h1v1h-1zM119 439h1v1h-1zM137 439h1v1h-1zM156 439h1v1h-1zM175 439h1v1h-1zM194 439h1v1h-1zM213 439h1v1h-1zM231 439h1v1h-1zM250 439h1v1h-1zM269 439h1v1h-1zM288 439h1v1h-1zM307 439h1v1h-1zM325 439h1v1h-1zM344 439h1v1h-1zM363 439h1v1h-1zM382 439h1v1h-1zM400 439h1v1h-1zM419 439h1v1h-1zM438 439h1v1h-1zM457 439h1v1h-1zM476 439h1v1h-1zM494 439h1v1h-1zM513 439h1v1h-1zM532 439h1v1h-1zM551 439h1v1h-1zM570 439h1v1h-1zM588 439h1v1h-1zM607 439h1v1h-1zM626 439h1v1h-1zM645 439h1v1h-1zM663 439h1v1h-1zM682 439h1v1h-1zM701 439h1v1h-1zM720 439h1v1h-1zM739 439h1v1h-1zM757 439h1v1h-1zM776 439h1v1h-1zM795 439h1v1h-1zM814 439h1v1h-1zM833 439h1v1h-1zM851 439h1v1h-1zM870 439h1v1h-1zM889 439h1v1h-1zM908 439h1v1h-1zM926 439h1v1h-1zM945 439h1v1h-1zM964 439h1v1h-1zM983 439h1v1h-1zM1002 439h1v1h-1zM1020 439h1v1h-1zM1039 439h1v1h-1zM1058 439h1v1h-1zM1077 439h1v1h-1zM1096 439h1v1h-1zM1114 439h1v1h-1zM1133 439h1v1h-1zM1152 439h1v1h-1zM1171 439h1v1h-1zM1189 439h1v1h-1zM1208 439h1v1h-1zM1227 439h1v1h-1zM1246 439h1v1h-1zM1265 439h1v1h-1zM1283 439h1v1h-1zM1302 439h1v1h-1zM1321 439h1v1h-1zM1340 439h1v1h-1zM1359 439h1v1h-1zM119 458h1v1h-1zM137 458h1v1h-1zM156 458h1v1h-1zM175 458h1v1h-1zM194 458h1v1h-1zM213 458h1v1h-1zM231 458h1v1h-1zM250 458h1v1h-1zM269 458h1v1h-1zM288 458h1v1h-1zM307 458h1v1h-1zM325 458h1v1h-1zM344 458h1v1h-1zM363 458h1v1h-1zM382 458h1v1h-1zM400 458h1v1h-1zM419 458h1v1h-1zM438 458h1v1h-1zM457 458h1v1h-1zM476 458h1v1h-1zM494 458h1v1h-1zM513 458h1v1h-1zM532 458h1v1h-1zM551 458h1v1h-1zM570 458h1v1h-1zM588 458h1v1h-1zM607 458h1v1h-1zM626 458h1v1h-1zM645 458h1v1h-1zM663 458h1v1h-1zM682 458h1v1h-1zM701 458h1v1h-1zM720 458h1v1h-1zM739 458h1v1h-1zM757 458h1v1h-1zM776 458h1v1h-1zM795 458h1v1h-1zM814 458h1v1h-1zM833 458h1v1h-1zM851 458h1v1h-1zM870 458h1v1h-1zM889 458h1v1h-1zM908 458h1v1h-1zM926 458h1v1h-1zM945 458h1v1h-1zM964 458h1v1h-1zM983 458h1v1h-1zM1002 458h1v1h-1zM1020 458h1v1h-1zM1039 458h1v1h-1zM1058 458h1v1h-1zM1077 458h1v1h-1zM1096 458h1v1h-1zM1114 458h1v1h-1zM1133 458h1v1h-1zM1152 458h1v1h-1zM1171 458h1v1h-1zM1189 458h1v1h-1zM1208 458h1v1h-1zM1227 458h1v1h-1zM1246 458h1v1h-1zM1265 458h1v1h-1zM1283 458h1v1h-1zM1302 458h1v1h-1zM1321 458h1v1h-1zM1340 458h1v1h-1zM1359 458h1v1h-1zM119 477h1v1h-1zM137 477h1v1h-1zM156 477h1v1h-1zM175 477h1v1h-1zM194 477h1v1h-1zM213 477h1v1h-1zM231 477h1v1h-1zM250 477h1v1h-1zM269 477h1v1h-1zM288 477h1v1h-1zM307 477h1v1h-1zM325 477h1v1h-1zM344 477h1v1h-1zM363 477h1v1h-1zM382 477h1v1h-1zM400 477h1v1h-1zM419 477h1v1h-1zM438 477h1v1h-1zM457 477h1v1h-1zM476 477h1v1h-1zM494 477h1v1h-1zM513 477h1v1h-1zM532 477h1v1h-1zM551 477h1v1h-1zM570 477h1v1h-1zM588 477h1v1h-1zM607 477h1v1h-1zM626 477h1v1h-1zM645 477h1v1h-1zM663 477h1v1h-1zM682 477h1v1h-1zM701 477h1v1h-1zM720 477h1v1h-1zM739 477h1v1h-1zM757 477h1v1h-1zM776 477h1v1h-1zM795 477h1v1h-1zM814 477h1v1h-1zM833 477h1v1h-1zM851 477h1v1h-1zM870 477h1v1h-1zM889 477h1v1h-1zM908 477h1v1h-1zM926 477h1v1h-1zM945 477h1v1h-1zM964 477h1v1h-1zM983 477h1v1h-1zM1002 477h1v1h-1zM1020 477h1v1h-1zM1039 477h1v1h-1zM1058 477h1v1h-1zM1077 477h1v1h-1zM1096 477h1v1h-1zM1114 477h1v1h-1zM1133 477h1v1h-1zM1152 477h1v1h-1zM1171 477h1v1h-1zM1189 477h1v1h-1zM1208 477h1v1h-1zM1227 477h1v1h-1zM1246 477h1v1h-1zM1265 477h1v1h-1zM1283 477h1v1h-1zM1302 477h1v1h-1zM1321 477h1v1h-1zM1340 477h1v1h-1zM1359 477h1v1h-1zM119 495h1v1h-1zM137 495h1v1h-1zM156 495h1v1h-1zM175 495h1v1h-1zM194 495h1v1h-1zM213 495h1v1h-1zM231 495h1v1h-1zM250 495h1v1h-1zM269 495h1v1h-1zM288 495h1v1h-1zM307 495h1v1h-1zM325 495h1v1h-1zM344 495h1v1h-1zM363 495h1v1h-1zM382 495h1v1h-1zM400 495h1v1h-1zM419 495h1v1h-1zM438 495h1v1h-1zM457 495h1v1h-1zM476 495h1v1h-1zM494 495h1v1h-1zM513 495h1v1h-1zM532 495h1v1h-1zM551 495h1v1h-1zM570 495h1v1h-1zM588 495h1v1h-1zM607 495h1v1h-1zM626 495h1v1h-1zM645 495h1v1h-1zM663 495h1v1h-1zM682 495h1v1h-1zM701 495h1v1h-1zM720 495h1v1h-1zM739 495h1v1h-1zM757 495h1v1h-1zM776 495h1v1h-1zM795 495h1v1h-1zM814 495h1v1h-1zM833 495h1v1h-1zM851 495h1v1h-1zM870 495h1v1h-1zM889 495h1v1h-1zM908 495h1v1h-1zM926 495h1v1h-1zM945 495h1v1h-1zM964 495h1v1h-1zM983 495h1v1h-1zM1002 495h1v1h-1zM1020 495h1v1h-1zM1039 495h1v1h-1zM1058 495h1v1h-1zM1077 495h1v1h-1zM1096 495h1v1h-1zM1114 495h1v1h-1zM1133 495h1v1h-1zM1152 495h1v1h-1zM1171 495h1v1h-1zM1189 495h1v1h-1zM1208 495h1v1h-1zM1227 495h1v1h-1zM1246 495h1v1h-1zM1265 495h1v1h-1zM1283 495h1v1h-1zM1302 495h1v1h-1zM1321 495h1v1h-1zM1340 495h1v1h-1zM1359 495h1v1h-1zM119 514h1v1h-1zM137 514h1v1h-1zM156 514h1v1h-1zM175 514h1v1h-1zM194 514h1v1h-1zM213 514h1v1h-1zM231 514h1v1h-1zM250 514h1v1h-1zM269 514h1v1h-1zM288 514h1v1h-1zM307 514h1v1h-1zM325 514h1v1h-1zM344 514h1v1h-1zM363 514h1v1h-1zM382 514h1v1h-1zM400 514h1v1h-1zM419 514h1v1h-1zM438 514h1v1h-1zM457 514h1v1h-1zM476 514h1v1h-1zM494 514h1v1h-1zM513 514h1v1h-1zM532 514h1v1h-1zM551 514h1v1h-1zM570 514h1v1h-1zM588 514h1v1h-1zM607 514h1v1h-1zM626 514h1v1h-1zM645 514h1v1h-1zM663 514h1v1h-1zM682 514h1v1h-1zM701 514h1v1h-1zM720 514h1v1h-1zM739 514h1v1h-1zM757 514h1v1h-1zM776 514h1v1h-1zM795 514h1v1h-1zM814 514h1v1h-1zM833 514h1v1h-1zM851 514h1v1h-1zM870 514h1v1h-1zM889 514h1v1h-1zM908 514h1v1h-1zM926 514h1v1h-1zM945 514h1v1h-1zM964 514h1v1h-1zM983 514h1v1h-1zM1002 514h1v1h-1zM1020 514h1v1h-1zM1039 514h1v1h-1zM1058 514h1v1h-1zM1077 514h1v1h-1zM1096 514h1v1h-1zM1114 514h1v1h-1zM1133 514h1v1h-1zM1152 514h1v1h-1zM1171 514h1v1h-1zM1189 514h1v1h-1zM1208 514h1v1h-1zM1227 514h1v1h-1zM1246 514h1v1h-1zM1265 514h1v1h-1zM1283 514h1v1h-1zM1302 514h1v1h-1zM1321 514h1v1h-1zM1340 514h1v1h-1zM1359 514h1v1h-1zM119 533h1v1h-1zM137 533h1v1h-1zM156 533h1v1h-1zM175 533h1v1h-1zM194 533h1v1h-1zM213 533h1v1h-1zM231 533h1v1h-1zM250 533h1v1h-1zM269 533h1v1h-1zM288 533h1v1h-1zM307 533h1v1h-1zM325 533h1v1h-1zM344 533h1v1h-1zM363 533h1v1h-1zM382 533h1v1h-1zM400 533h1v1h-1zM419 533h1v1h-1zM438 533h1v1h-1zM457 533h1v1h-1zM476 533h1v1h-1zM494 533h1v1h-1zM513 533h1v1h-1zM532 533h1v1h-1zM551 533h1v1h-1zM570 533h1v1h-1zM588 533h1v1h-1zM607 533h1v1h-1zM626 533h1v1h-1zM645 533h1v1h-1zM663 533h1v1h-1zM682 533h1v1h-1zM701 533h1v1h-1zM720 533h1v1h-1zM739 533h1v1h-1zM757 533h1v1h-1zM776 533h1v1h-1zM795 533h1v1h-1zM814 533h1v1h-1zM833 533h1v1h-1zM851 533h1v1h-1zM870 533h1v1h-1zM889 533h1v1h-1zM908 533h1v1h-1zM926 533h1v1h-1zM945 533h1v1h-1zM964 533h1v1h-1zM983 533h1v1h-1zM1002 533h1v1h-1zM1020 533h1v1h-1zM1039 533h1v1h-1zM1058 533h1v1h-1zM1077 533h1v1h-1zM1096 533h1v1h-1zM1114 533h1v1h-1zM1133 533h1v1h-1zM1152 533h1v1h-1zM1171 533h1v1h-1zM1189 533h1v1h-1zM1208 533h1v1h-1zM1227 533h1v1h-1zM1246 533h1v1h-1zM1265 533h1v1h-1zM1283 533h1v1h-1zM1302 533h1v1h-1zM1321 533h1v1h-1zM1340 533h1v1h-1zM1359 533h1v1h-1zM119 552h1v1h-1zM137 552h1v1h-1zM156 552h1v1h-1zM175 552h1v1h-1zM194 552h1v1h-1zM213 552h1v1h-1zM231 552h1v1h-1zM250 552h1v1h-1zM269 552h1v1h-1zM288 552h1v1h-1zM307 552h1v1h-1zM325 552h1v1h-1zM344 552h1v1h-1zM363 552h1v1h-1zM382 552h1v1h-1zM400 552h1v1h-1zM419 552h1v1h-1zM438 552h1v1h-1zM457 552h1v1h-1zM476 552h1v1h-1zM494 552h1v1h-1zM513 552h1v1h-1zM532 552h1v1h-1zM551 552h1v1h-1zM570 552h1v1h-1zM588 552h1v1h-1zM607 552h1v1h-1zM626 552h1v1h-1zM645 552h1v1h-1zM663 552h1v1h-1zM682 552h1v1h-1zM701 552h1v1h-1zM720 552h1v1h-1zM739 552h1v1h-1zM757 552h1v1h-1zM776 552h1v1h-1zM795 552h1v1h-1zM814 552h1v1h-1zM833 552h1v1h-1zM851 552h1v1h-1zM870 552h1v1h-1zM889 552h1v1h-1zM908 552h1v1h-1zM926 552h1v1h-1zM945 552h1v1h-1zM964 552h1v1h-1zM983 552h1v1h-1zM1002 552h1v1h-1zM1020 552h1v1h-1zM1039 552h1v1h-1zM1058 552h1v1h-1zM1077 552h1v1h-1zM1096 552h1v1h-1zM1114 552h1v1h-1zM1133 552h1v1h-1zM1152 552h1v1h-1zM1171 552h1v1h-1zM1189 552h1v1h-1zM1208 552h1v1h-1zM1227 552h1v1h-1zM1246 552h1v1h-1zM1265 552h1v1h-1zM1283 552h1v1h-1zM1302 552h1v1h-1zM1321 552h1v1h-1zM1340 552h1v1h-1zM1359 552h1v1h-1zM119 571h1v1h-1zM137 571h1v1h-1zM156 571h1v1h-1zM175 571h1v1h-1zM194 571h1v1h-1zM213 571h1v1h-1zM231 571h1v1h-1zM250 571h1v1h-1zM269 571h1v1h-1zM288 571h1v1h-1zM307 571h1v1h-1zM325 571h1v1h-1zM344 571h1v1h-1zM363 571h1v1h-1zM382 571h1v1h-1zM400 571h1v1h-1zM419 571h1v1h-1zM438 571h1v1h-1zM457 571h1v1h-1zM476 571h1v1h-1zM494 571h1v1h-1zM513 571h1v1h-1zM532 571h1v1h-1zM551 571h1v1h-1zM570 571h1v1h-1zM588 571h1v1h-1zM607 571h1v1h-1zM626 571h1v1h-1zM645 571h1v1h-1zM663 571h1v1h-1zM682 571h1v1h-1zM701 571h1v1h-1zM720 571h1v1h-1zM739 571h1v1h-1zM757 571h1v1h-1zM776 571h1v1h-1zM795 571h1v1h-1zM814 571h1v1h-1zM833 571h1v1h-1zM851 571h1v1h-1zM870 571h1v1h-1zM889 571h1v1h-1zM908 571h1v1h-1zM926 571h1v1h-1zM945 571h1v1h-1zM964 571h1v1h-1zM983 571h1v1h-1zM1002 571h1v1h-1zM1020 571h1v1h-1zM1039 571h1v1h-1zM1058 571h1v1h-1zM1077 571h1v1h-1zM1096 571h1v1h-1zM1114 571h1v1h-1zM1133 571h1v1h-1zM1152 571h1v1h-1zM1171 571h1v1h-1zM1189 571h1v1h-1zM1208 571h1v1h-1zM1227 571h1v1h-1zM1246 571h1v1h-1zM1265 571h1v1h-1zM1283 571h1v1h-1zM1302 571h1v1h-1zM1321 571h1v1h-1zM1340 571h1v1h-1zM1359 571h1v1h-1zM119 589h1v1h-1zM137 589h1v1h-1zM156 589h1v1h-1zM175 589h1v1h-1zM194 589h1v1h-1zM213 589h1v1h-1zM231 589h1v1h-1zM250 589h1v1h-1zM269 589h1v1h-1zM288 589h1v1h-1zM307 589h1v1h-1zM325 589h1v1h-1zM344 589h1v1h-1zM363 589h1v1h-1zM382 589h1v1h-1zM400 589h1v1h-1zM419 589h1v1h-1zM438 589h1v1h-1zM457 589h1v1h-1zM476 589h1v1h-1zM494 589h1v1h-1zM513 589h1v1h-1zM532 589h1v1h-1zM551 589h1v1h-1zM570 589h1v1h-1zM588 589h1v1h-1zM607 589h1v1h-1zM626 589h1v1h-1zM645 589h1v1h-1zM663 589h1v1h-1zM682 589h1v1h-1zM701 589h1v1h-1zM720 589h1v1h-1zM739 589h1v1h-1zM757 589h1v1h-1zM776 589h1v1h-1zM795 589h1v1h-1zM814 589h1v1h-1zM833 589h1v1h-1zM851 589h1v1h-1zM870 589h1v1h-1zM889 589h1v1h-1zM908 589h1v1h-1zM926 589h1v1h-1zM945 589h1v1h-1zM964 589h1v1h-1zM983 589h1v1h-1zM1002 589h1v1h-1zM1020 589h1v1h-1zM1039 589h1v1h-1zM1058 589h1v1h-1zM1077 589h1v1h-1zM1096 589h1v1h-1zM1114 589h1v1h-1zM1133 589h1v1h-1zM1152 589h1v1h-1zM1171 589h1v1h-1zM1189 589h1v1h-1zM1208 589h1v1h-1zM1227 589h1v1h-1zM1246 589h1v1h-1zM1265 589h1v1h-1zM1283 589h1v1h-1zM1302 589h1v1h-1zM1321 589h1v1h-1zM1340 589h1v1h-1zM1359 589h1v1h-1zM119 608h1v1h-1zM137 608h1v1h-1zM156 608h1v1h-1zM175 608h1v1h-1zM194 608h1v1h-1zM213 608h1v1h-1zM231 608h1v1h-1zM250 608h1v1h-1zM269 608h1v1h-1zM288 608h1v1h-1zM307 608h1v1h-1zM325 608h1v1h-1zM344 608h1v1h-1zM363 608h1v1h-1zM382 608h1v1h-1zM400 608h1v1h-1zM419 608h1v1h-1zM438 608h1v1h-1zM457 608h1v1h-1zM476 608h1v1h-1zM494 608h1v1h-1zM513 608h1v1h-1zM532 608h1v1h-1zM551 608h1v1h-1zM570 608h1v1h-1zM588 608h1v1h-1zM607 608h1v1h-1zM626 608h1v1h-1zM645 608h1v1h-1zM663 608h1v1h-1zM682 608h1v1h-1zM701 608h1v1h-1zM720 608h1v1h-1zM739 608h1v1h-1zM757 608h1v1h-1zM776 608h1v1h-1zM795 608h1v1h-1zM814 608h1v1h-1zM833 608h1v1h-1zM851 608h1v1h-1zM870 608h1v1h-1zM889 608h1v1h-1zM908 608h1v1h-1zM926 608h1v1h-1zM945 608h1v1h-1zM964 608h1v1h-1zM983 608h1v1h-1zM1002 608h1v1h-1zM1020 608h1v1h-1zM1039 608h1v1h-1zM1058 608h1v1h-1zM1077 608h1v1h-1zM1096 608h1v1h-1zM1114 608h1v1h-1zM1133 608h1v1h-1zM1152 608h1v1h-1zM1171 608h1v1h-1zM1189 608h1v1h-1zM1208 608h1v1h-1zM1227 608h1v1h-1zM1246 608h1v1h-1zM1265 608h1v1h-1zM1283 608h1v1h-1zM1302 608h1v1h-1zM1321 608h1v1h-1zM1340 608h1v1h-1zM1359 608h1v1h-1zM119 627h1v1h-1zM137 627h1v1h-1zM156 627h1v1h-1zM175 627h1v1h-1zM194 627h1v1h-1zM213 627h1v1h-1zM231 627h1v1h-1zM250 627h1v1h-1zM269 627h1v1h-1zM288 627h1v1h-1zM307 627h1v1h-1zM325 627h1v1h-1zM344 627h1v1h-1zM363 627h1v1h-1zM382 627h1v1h-1zM400 627h1v1h-1zM419 627h1v1h-1zM438 627h1v1h-1zM457 627h1v1h-1zM476 627h1v1h-1zM494 627h1v1h-1zM513 627h1v1h-1zM532 627h1v1h-1zM551 627h1v1h-1zM570 627h1v1h-1zM588 627h1v1h-1zM607 627h1v1h-1zM626 627h1v1h-1zM645 627h1v1h-1zM663 627h1v1h-1zM682 627h1v1h-1zM701 627h1v1h-1zM720 627h1v1h-1zM739 627h1v1h-1zM757 627h1v1h-1zM776 627h1v1h-1zM795 627h1v1h-1zM814 627h1v1h-1zM833 627h1v1h-1zM851 627h1v1h-1zM870 627h1v1h-1zM889 627h1v1h-1zM908 627h1v1h-1zM926 627h1v1h-1zM945 627h1v1h-1zM964 627h1v1h-1zM983 627h1v1h-1zM1002 627h1v1h-1zM1020 627h1v1h-1zM1039 627h1v1h-1zM1058 627h1v1h-1zM1077 627h1v1h-1zM1096 627h1v1h-1zM1114 627h1v1h-1zM1133 627h1v1h-1zM1152 627h1v1h-1zM1171 627h1v1h-1zM1189 627h1v1h-1zM1208 627h1v1h-1zM1227 627h1v1h-1zM1246 627h1v1h-1zM1265 627h1v1h-1zM1283 627h1v1h-1zM1302 627h1v1h-1zM1321 627h1v1h-1zM1340 627h1v1h-1zM1359 627h1v1h-1zM119 646h1v1h-1zM137 646h1v1h-1zM156 646h1v1h-1zM175 646h1v1h-1zM194 646h1v1h-1zM213 646h1v1h-1zM231 646h1v1h-1zM250 646h1v1h-1zM269 646h1v1h-1zM288 646h1v1h-1zM307 646h1v1h-1zM325 646h1v1h-1zM344 646h1v1h-1zM363 646h1v1h-1zM382 646h1v1h-1zM400 646h1v1h-1zM419 646h1v1h-1zM438 646h1v1h-1zM457 646h1v1h-1zM476 646h1v1h-1zM494 646h1v1h-1zM513 646h1v1h-1zM532 646h1v1h-1zM551 646h1v1h-1zM570 646h1v1h-1zM588 646h1v1h-1zM607 646h1v1h-1zM626 646h1v1h-1zM645 646h1v1h-1zM663 646h1v1h-1zM682 646h1v1h-1zM701 646h1v1h-1zM720 646h1v1h-1zM739 646h1v1h-1zM757 646h1v1h-1zM776 646h1v1h-1zM795 646h1v1h-1zM814 646h1v1h-1zM833 646h1v1h-1zM851 646h1v1h-1zM870 646h1v1h-1zM889 646h1v1h-1zM908 646h1v1h-1zM926 646h1v1h-1zM945 646h1v1h-1zM964 646h1v1h-1zM983 646h1v1h-1zM1002 646h1v1h-1zM1020 646h1v1h-1zM1039 646h1v1h-1zM1058 646h1v1h-1zM1077 646h1v1h-1zM1096 646h1v1h-1zM1114 646h1v1h-1zM1133 646h1v1h-1zM1152 646h1v1h-1zM1171 646h1v1h-1zM1189 646h1v1h-1zM1208 646h1v1h-1zM1227 646h1v1h-1zM1246 646h1v1h-1zM1265 646h1v1h-1zM1283 646h1v1h-1zM1302 646h1v1h-1zM1321 646h1v1h-1zM1340 646h1v1h-1zM1359 646h1v1h-1zM119 665h1v1h-1zM137 665h1v1h-1zM156 665h1v1h-1zM175 665h1v1h-1zM194 665h1v1h-1zM213 665h1v1h-1zM231 665h1v1h-1zM250 665h1v1h-1zM269 665h1v1h-1zM288 665h1v1h-1zM307 665h1v1h-1zM325 665h1v1h-1zM344 665h1v1h-1zM363 665h1v1h-1zM382 665h1v1h-1zM400 665h1v1h-1zM419 665h1v1h-1zM438 665h1v1h-1zM457 665h1v1h-1zM476 665h1v1h-1zM494 665h1v1h-1zM513 665h1v1h-1zM532 665h1v1h-1zM551 665h1v1h-1zM570 665h1v1h-1zM588 665h1v1h-1zM607 665h1v1h-1zM626 665h1v1h-1zM645 665h1v1h-1zM663 665h1v1h-1zM682 665h1v1h-1zM701 665h1v1h-1zM720 665h1v1h-1zM739 665h1v1h-1zM757 665h1v1h-1zM776 665h1v1h-1zM795 665h1v1h-1zM814 665h1v1h-1zM833 665h1v1h-1zM851 665h1v1h-1zM870 665h1v1h-1zM889 665h1v1h-1zM908 665h1v1h-1zM926 665h1v1h-1zM945 665h1v1h-1zM964 665h1v1h-1zM983 665h1v1h-1zM1002 665h1v1h-1zM1020 665h1v1h-1zM1039 665h1v1h-1zM1058 665h1v1h-1zM1077 665h1v1h-1zM1096 665h1v1h-1zM1114 665h1v1h-1zM1133 665h1v1h-1zM1152 665h1v1h-1zM1171 665h1v1h-1zM1189 665h1v1h-1zM1208 665h1v1h-1zM1227 665h1v1h-1zM1246 665h1v1h-1zM1265 665h1v1h-1zM1283 665h1v1h-1zM1302 665h1v1h-1zM1321 665h1v1h-1zM1340 665h1v1h-1zM1359 665h1v1h-1zM119 683h1v1h-1zM137 683h1v1h-1zM156 683h1v1h-1zM175 683h1v1h-1zM194 683h1v1h-1zM213 683h1v1h-1zM231 683h1v1h-1zM250 683h1v1h-1zM269 683h1v1h-1zM288 683h1v1h-1zM307 683h1v1h-1zM325 683h1v1h-1zM344 683h1v1h-1zM363 683h1v1h-1zM382 683h1v1h-1zM400 683h1v1h-1zM419 683h1v1h-1zM438 683h1v1h-1zM457 683h1v1h-1zM476 683h1v1h-1zM494 683h1v1h-1zM513 683h1v1h-1zM532 683h1v1h-1zM551 683h1v1h-1zM570 683h1v1h-1zM588 683h1v1h-1zM607 683h1v1h-1zM626 683h1v1h-1zM645 683h1v1h-1zM663 683h1v1h-1zM682 683h1v1h-1zM701 683h1v1h-1zM720 683h1v1h-1zM739 683h1v1h-1zM757 683h1v1h-1zM776 683h1v1h-1zM795 683h1v1h-1zM814 683h1v1h-1zM833 683h1v1h-1zM851 683h1v1h-1zM870 683h1v1h-1zM889 683h1v1h-1zM908 683h1v1h-1zM926 683h1v1h-1zM945 683h1v1h-1zM964 683h1v1h-1zM983 683h1v1h-1zM1002 683h1v1h-1zM1020 683h1v1h-1zM1039 683h1v1h-1zM1058 683h1v1h-1zM1077 683h1v1h-1zM1096 683h1v1h-1zM1114 683h1v1h-1zM1133 683h1v1h-1zM1152 683h1v1h-1zM1171 683h1v1h-1zM1189 683h1v1h-1zM1208 683h1v1h-1zM1227 683h1v1h-1zM1246 683h1v1h-1zM1265 683h1v1h-1zM1283 683h1v1h-1zM1302 683h1v1h-1zM1321 683h1v1h-1zM1340 683h1v1h-1zM1359 683h1v1h-1zM119 702h1v1h-1zM137 702h1v1h-1zM156 702h1v1h-1zM175 702h1v1h-1zM194 702h1v1h-1zM213 702h1v1h-1zM231 702h1v1h-1zM250 702h1v1h-1zM269 702h1v1h-1zM288 702h1v1h-1zM307 702h1v1h-1zM325 702h1v1h-1zM344 702h1v1h-1zM363 702h1v1h-1zM382 702h1v1h-1zM400 702h1v1h-1zM419 702h1v1h-1zM438 702h1v1h-1zM457 702h1v1h-1zM476 702h1v1h-1zM494 702h1v1h-1zM513 702h1v1h-1zM532 702h1v1h-1zM551 702h1v1h-1zM570 702h1v1h-1zM588 702h1v1h-1zM607 702h1v1h-1zM626 702h1v1h-1zM645 702h1v1h-1zM663 702h1v1h-1zM682 702h1v1h-1zM701 702h1v1h-1zM720 702h1v1h-1zM739 702h1v1h-1zM757 702h1v1h-1zM776 702h1v1h-1zM795 702h1v1h-1zM814 702h1v1h-1zM833 702h1v1h-1zM851 702h1v1h-1zM870 702h1v1h-1zM889 702h1v1h-1zM908 702h1v1h-1zM926 702h1v1h-1zM945 702h1v1h-1zM964 702h1v1h-1zM983 702h1v1h-1zM1002 702h1v1h-1zM1020 702h1v1h-1zM1039 702h1v1h-1zM1058 702h1v1h-1zM1077 702h1v1h-1zM1096 702h1v1h-1zM1114 702h1v1h-1zM1133 702h1v1h-1zM1152 702h1v1h-1zM1171 702h1v1h-1zM1189 702h1v1h-1zM1208 702h1v1h-1zM1227 702h1v1h-1zM1246 702h1v1h-1zM1265 702h1v1h-1zM1283 702h1v1h-1zM1302 702h1v1h-1zM1321 702h1v1h-1zM1340 702h1v1h-1zM1359 702h1v1h-1zM119 721h1v1h-1zM137 721h1v1h-1zM156 721h1v1h-1zM175 721h1v1h-1zM194 721h1v1h-1zM213 721h1v1h-1zM231 721h1v1h-1zM250 721h1v1h-1zM269 721h1v1h-1zM288 721h1v1h-1zM307 721h1v1h-1zM325 721h1v1h-1zM344 721h1v1h-1zM363 721h1v1h-1zM382 721h1v1h-1zM400 721h1v1h-1zM419 721h1v1h-1zM438 721h1v1h-1zM457 721h1v1h-1zM476 721h1v1h-1zM494 721h1v1h-1zM513 721h1v1h-1zM532 721h1v1h-1zM551 721h1v1h-1zM570 721h1v1h-1zM588 721h1v1h-1zM607 721h1v1h-1zM626 721h1v1h-1zM645 721h1v1h-1zM663 721h1v1h-1zM682 721h1v1h-1zM701 721h1v1h-1zM720 721h1v1h-1zM739 721h1v1h-1zM757 721h1v1h-1zM776 721h1v1h-1zM795 721h1v1h-1zM814 721h1v1h-1zM833 721h1v1h-1zM851 721h1v1h-1zM870 721h1v1h-1zM889 721h1v1h-1zM908 721h1v1h-1zM926 721h1v1h-1zM945 721h1v1h-1zM964 721h1v1h-1zM983 721h1v1h-1zM1002 721h1v1h-1zM1020 721h1v1h-1zM1039 721h1v1h-1zM1058 721h1v1h-1zM1077 721h1v1h-1zM1096 721h1v1h-1zM1114 721h1v1h-1zM1133 721h1v1h-1zM1152 721h1v1h-1zM1171 721h1v1h-1zM1189 721h1v1h-1zM1208 721h1v1h-1zM1227 721h1v1h-1zM1246 721h1v1h-1zM1265 721h1v1h-1zM1283 721h1v1h-1zM1302 721h1v1h-1zM1321 721h1v1h-1zM1340 721h1v1h-1zM1359 721h1v1h-1zM119 740h1v1h-1zM137 740h1v1h-1zM156 740h1v1h-1zM175 740h1v1h-1zM194 740h1v1h-1zM213 740h1v1h-1zM231 740h1v1h-1zM250 740h1v1h-1zM269 740h1v1h-1zM288 740h1v1h-1zM307 740h1v1h-1zM325 740h1v1h-1zM344 740h1v1h-1zM363 740h1v1h-1zM382 740h1v1h-1zM400 740h1v1h-1zM419 740h1v1h-1zM438 740h1v1h-1zM457 740h1v1h-1zM476 740h1v1h-1zM494 740h1v1h-1zM513 740h1v1h-1zM532 740h1v1h-1zM551 740h1v1h-1zM570 740h1v1h-1zM588 740h1v1h-1zM607 740h1v1h-1zM626 740h1v1h-1zM645 740h1v1h-1zM663 740h1v1h-1zM682 740h1v1h-1zM701 740h1v1h-1zM720 740h1v1h-1zM739 740h1v1h-1zM757 740h1v1h-1zM776 740h1v1h-1zM795 740h1v1h-1zM814 740h1v1h-1zM833 740h1v1h-1zM851 740h1v1h-1zM870 740h1v1h-1zM889 740h1v1h-1zM908 740h1v1h-1zM926 740h1v1h-1zM945 740h1v1h-1zM964 740h1v1h-1zM983 740h1v1h-1zM1002 740h1v1h-1zM1020 740h1v1h-1zM1039 740h1v1h-1zM1058 740h1v1h-1zM1077 740h1v1h-1zM1096 740h1v1h-1zM1114 740h1v1h-1zM1133 740h1v1h-1zM1152 740h1v1h-1zM1171 740h1v1h-1zM1189 740h1v1h-1zM1208 740h1v1h-1zM1227 740h1v1h-1zM1246 740h1v1h-1zM1265 740h1v1h-1zM1283 740h1v1h-1zM1302 740h1v1h-1zM1321 740h1v1h-1zM1340 740h1v1h-1zM1359 740h1v1h-1zM119 758h1v1h-1zM137 758h1v1h-1zM156 758h1v1h-1zM175 758h1v1h-1zM194 758h1v1h-1zM213 758h1v1h-1zM231 758h1v1h-1zM250 758h1v1h-1zM269 758h1v1h-1zM288 758h1v1h-1zM307 758h1v1h-1zM325 758h1v1h-1zM344 758h1v1h-1zM363 758h1v1h-1zM382 758h1v1h-1zM400 758h1v1h-1zM419 758h1v1h-1zM438 758h1v1h-1zM457 758h1v1h-1zM476 758h1v1h-1zM494 758h1v1h-1zM513 758h1v1h-1zM532 758h1v1h-1zM551 758h1v1h-1zM570 758h1v1h-1zM588 758h1v1h-1zM607 758h1v1h-1zM626 758h1v1h-1zM645 758h1v1h-1zM663 758h1v1h-1zM682 758h1v1h-1zM701 758h1v1h-1zM720 758h1v1h-1zM739 758h1v1h-1zM757 758h1v1h-1zM776 758h1v1h-1zM795 758h1v1h-1zM814 758h1v1h-1zM833 758h1v1h-1zM851 758h1v1h-1zM870 758h1v1h-1zM889 758h1v1h-1zM908 758h1v1h-1zM926 758h1v1h-1zM945 758h1v1h-1zM964 758h1v1h-1zM983 758h1v1h-1zM1002 758h1v1h-1zM1020 758h1v1h-1zM1039 758h1v1h-1zM1058 758h1v1h-1zM1077 758h1v1h-1zM1096 758h1v1h-1zM1114 758h1v1h-1zM1133 758h1v1h-1zM1152 758h1v1h-1zM1171 758h1v1h-1zM1189 758h1v1h-1zM1208 758h1v1h-1zM1227 758h1v1h-1zM1246 758h1v1h-1zM1265 758h1v1h-1zM1283 758h1v1h-1zM1302 758h1v1h-1zM1321 758h1v1h-1zM1340 758h1v1h-1zM1359 758h1v1h-1zM119 777h1v1h-1zM137 777h1v1h-1zM156 777h1v1h-1zM175 777h1v1h-1zM194 777h1v1h-1zM213 777h1v1h-1zM231 777h1v1h-1zM250 777h1v1h-1zM269 777h1v1h-1zM288 777h1v1h-1zM307 777h1v1h-1zM325 777h1v1h-1zM344 777h1v1h-1zM363 777h1v1h-1zM382 777h1v1h-1zM400 777h1v1h-1zM419 777h1v1h-1zM438 777h1v1h-1zM457 777h1v1h-1zM476 777h1v1h-1zM494 777h1v1h-1zM513 777h1v1h-1zM532 777h1v1h-1zM551 777h1v1h-1zM570 777h1v1h-1zM588 777h1v1h-1zM607 777h1v1h-1zM626 777h1v1h-1zM645 777h1v1h-1zM663 777h1v1h-1zM682 777h1v1h-1zM701 777h1v1h-1zM720 777h1v1h-1zM739 777h1v1h-1zM757 777h1v1h-1zM776 777h1v1h-1zM795 777h1v1h-1zM814 777h1v1h-1zM833 777h1v1h-1zM851 777h1v1h-1zM870 777h1v1h-1zM889 777h1v1h-1zM908 777h1v1h-1zM926 777h1v1h-1zM945 777h1v1h-1zM964 777h1v1h-1zM983 777h1v1h-1zM1002 777h1v1h-1zM1020 777h1v1h-1zM1039 777h1v1h-1zM1058 777h1v1h-1zM1077 777h1v1h-1zM1096 777h1v1h-1zM1114 777h1v1h-1zM1133 777h1v1h-1zM1152 777h1v1h-1zM1171 777h1v1h-1zM1189 777h1v1h-1zM1208 777h1v1h-1zM1227 777h1v1h-1zM1246 777h1v1h-1zM1265 777h1v1h-1zM1283 777h1v1h-1zM1302 777h1v1h-1zM1321 777h1v1h-1zM1340 777h1v1h-1zM1359 777h1v1h-1zM119 796h1v1h-1zM137 796h1v1h-1zM156 796h1v1h-1zM175 796h1v1h-1zM194 796h1v1h-1zM213 796h1v1h-1zM231 796h1v1h-1zM250 796h1v1h-1zM269 796h1v1h-1zM288 796h1v1h-1zM307 796h1v1h-1zM325 796h1v1h-1zM344 796h1v1h-1zM363 796h1v1h-1zM382 796h1v1h-1zM400 796h1v1h-1zM419 796h1v1h-1zM438 796h1v1h-1zM457 796h1v1h-1zM476 796h1v1h-1zM494 796h1v1h-1zM513 796h1v1h-1zM532 796h1v1h-1zM551 796h1v1h-1zM570 796h1v1h-1zM588 796h1v1h-1zM607 796h1v1h-1zM626 796h1v1h-1zM645 796h1v1h-1zM663 796h1v1h-1zM682 796h1v1h-1zM701 796h1v1h-1zM720 796h1v1h-1zM739 796h1v1h-1zM757 796h1v1h-1zM776 796h1v1h-1zM795 796h1v1h-1zM814 796h1v1h-1zM833 796h1v1h-1zM851 796h1v1h-1zM870 796h1v1h-1zM889 796h1v1h-1zM908 796h1v1h-1zM926 796h1v1h-1zM945 796h1v1h-1zM964 796h1v1h-1zM983 796h1v1h-1zM1002 796h1v1h-1zM1020 796h1v1h-1zM1039 796h1v1h-1zM1058 796h1v1h-1zM1077 796h1v1h-1zM1096 796h1v1h-1zM1114 796h1v1h-1zM1133 796h1v1h-1zM1152 796h1v1h-1zM1171 796h1v1h-1zM1189 796h1v1h-1zM1208 796h1v1h-1zM1227 796h1v1h-1zM1246 796h1v1h-1zM1265 796h1v1h-1zM1283 796h1v1h-1zM1302 796h1v1h-1zM1321 796h1v1h-1zM1340 796h1v1h-1zM1359 796h1v1h-1zM119 815h1v1h-1zM137 815h1v1h-1zM156 815h1v1h-1zM175 815h1v1h-1zM194 815h1v1h-1zM213 815h1v1h-1zM231 815h1v1h-1zM250 815h1v1h-1zM269 815h1v1h-1zM288 815h1v1h-1zM307 815h1v1h-1zM325 815h1v1h-1zM344 815h1v1h-1zM363 815h1v1h-1zM382 815h1v1h-1zM400 815h1v1h-1zM419 815h1v1h-1zM438 815h1v1h-1zM457 815h1v1h-1zM476 815h1v1h-1zM494 815h1v1h-1zM513 815h1v1h-1zM532 815h1v1h-1zM551 815h1v1h-1zM570 815h1v1h-1zM588 815h1v1h-1zM607 815h1v1h-1zM626 815h1v1h-1zM645 815h1v1h-1zM663 815h1v1h-1zM682 815h1v1h-1zM701 815h1v1h-1zM720 815h1v1h-1zM739 815h1v1h-1zM757 815h1v1h-1zM776 815h1v1h-1zM795 815h1v1h-1zM814 815h1v1h-1zM833 815h1v1h-1zM851 815h1v1h-1zM870 815h1v1h-1zM889 815h1v1h-1zM908 815h1v1h-1zM926 815h1v1h-1zM945 815h1v1h-1zM964 815h1v1h-1zM983 815h1v1h-1zM1002 815h1v1h-1zM1020 815h1v1h-1zM1039 815h1v1h-1zM1058 815h1v1h-1zM1077 815h1v1h-1zM1096 815h1v1h-1zM1114 815h1v1h-1zM1133 815h1v1h-1zM1152 815h1v1h-1zM1171 815h1v1h-1zM1189 815h1v1h-1zM1208 815h1v1h-1zM1227 815h1v1h-1zM1246 815h1v1h-1zM1265 815h1v1h-1zM1283 815h1v1h-1zM1302 815h1v1h-1zM1321 815h1v1h-1zM1340 815h1v1h-1zM1359 815h1v1h-1zM119 834h1v1h-1zM137 834h1v1h-1zM156 834h1v1h-1zM175 834h1v1h-1zM194 834h1v1h-1zM213 834h1v1h-1zM231 834h1v1h-1zM250 834h1v1h-1zM269 834h1v1h-1zM288 834h1v1h-1zM307 834h1v1h-1zM325 834h1v1h-1zM344 834h1v1h-1zM363 834h1v1h-1zM382 834h1v1h-1zM400 834h1v1h-1zM419 834h1v1h-1zM438 834h1v1h-1zM457 834h1v1h-1zM476 834h1v1h-1zM494 834h1v1h-1zM513 834h1v1h-1zM532 834h1v1h-1zM551 834h1v1h-1zM570 834h1v1h-1zM588 834h1v1h-1zM607 834h1v1h-1zM626 834h1v1h-1zM645 834h1v1h-1zM663 834h1v1h-1zM682 834h1v1h-1zM701 834h1v1h-1zM720 834h1v1h-1zM739 834h1v1h-1zM757 834h1v1h-1zM776 834h1v1h-1zM795 834h1v1h-1zM814 834h1v1h-1zM833 834h1v1h-1zM851 834h1v1h-1zM870 834h1v1h-1zM889 834h1v1h-1zM908 834h1v1h-1zM926 834h1v1h-1zM945 834h1v1h-1zM964 834h1v1h-1zM983 834h1v1h-1zM1002 834h1v1h-1zM1020 834h1v1h-1zM1039 834h1v1h-1zM1058 834h1v1h-1zM1077 834h1v1h-1zM1096 834h1v1h-1zM1114 834h1v1h-1zM1133 834h1v1h-1zM1152 834h1v1h-1zM1171 834h1v1h-1zM1189 834h1v1h-1zM1208 834h1v1h-1zM1227 834h1v1h-1zM1246 834h1v1h-1zM1265 834h1v1h-1zM1283 834h1v1h-1zM1302 834h1v1h-1zM1321 834h1v1h-1zM1340 834h1v1h-1zM1359 834h1v1h-1zM119 852h1v1h-1zM137 852h1v1h-1zM156 852h1v1h-1zM175 852h1v1h-1zM194 852h1v1h-1zM213 852h1v1h-1zM231 852h1v1h-1zM250 852h1v1h-1zM269 852h1v1h-1zM288 852h1v1h-1zM307 852h1v1h-1zM325 852h1v1h-1zM344 852h1v1h-1zM363 852h1v1h-1zM382 852h1v1h-1zM400 852h1v1h-1zM419 852h1v1h-1zM438 852h1v1h-1zM457 852h1v1h-1zM476 852h1v1h-1zM494 852h1v1h-1zM513 852h1v1h-1zM532 852h1v1h-1zM551 852h1v1h-1zM570 852h1v1h-1zM588 852h1v1h-1zM607 852h1v1h-1zM626 852h1v1h-1zM645 852h1v1h-1zM663 852h1v1h-1zM682 852h1v1h-1zM701 852h1v1h-1zM720 852h1v1h-1zM739 852h1v1h-1zM757 852h1v1h-1zM776 852h1v1h-1zM795 852h1v1h-1zM814 852h1v1h-1zM833 852h1v1h-1zM851 852h1v1h-1zM870 852h1v1h-1zM889 852h1v1h-1zM908 852h1v1h-1zM926 852h1v1h-1zM945 852h1v1h-1zM964 852h1v1h-1zM983 852h1v1h-1zM1002 852h1v1h-1zM1020 852h1v1h-1zM1039 852h1v1h-1zM1058 852h1v1h-1zM1077 852h1v1h-1zM1096 852h1v1h-1zM1114 852h1v1h-1zM1133 852h1v1h-1zM1152 852h1v1h-1zM1171 852h1v1h-1zM1189 852h1v1h-1zM1208 852h1v1h-1zM1227 852h1v1h-1zM1246 852h1v1h-1zM1265 852h1v1h-1zM1283 852h1v1h-1zM1302 852h1v1h-1zM1321 852h1v1h-1zM1340 852h1v1h-1zM1359 852h1v1h-1zM119 871h1v1h-1zM137 871h1v1h-1zM156 871h1v1h-1zM175 871h1v1h-1zM194 871h1v1h-1zM213 871h1v1h-1zM231 871h1v1h-1zM250 871h1v1h-1zM269 871h1v1h-1zM288 871h1v1h-1zM307 871h1v1h-1zM325 871h1v1h-1zM344 871h1v1h-1zM363 871h1v1h-1zM382 871h1v1h-1zM400 871h1v1h-1zM419 871h1v1h-1zM438 871h1v1h-1zM457 871h1v1h-1zM476 871h1v1h-1zM494 871h1v1h-1zM513 871h1v1h-1zM532 871h1v1h-1zM551 871h1v1h-1zM570 871h1v1h-1zM588 871h1v1h-1zM607 871h1v1h-1zM626 871h1v1h-1zM645 871h1v1h-1zM663 871h1v1h-1zM682 871h1v1h-1zM701 871h1v1h-1zM720 871h1v1h-1zM739 871h1v1h-1zM757 871h1v1h-1zM776 871h1v1h-1zM795 871h1v1h-1zM814 871h1v1h-1zM833 871h1v1h-1zM851 871h1v1h-1zM870 871h1v1h-1zM889 871h1v1h-1zM908 871h1v1h-1zM926 871h1v1h-1zM945 871h1v1h-1zM964 871h1v1h-1zM983 871h1v1h-1zM1002 871h1v1h-1zM1020 871h1v1h-1zM1039 871h1v1h-1zM1058 871h1v1h-1zM1077 871h1v1h-1zM1096 871h1v1h-1zM1114 871h1v1h-1zM1133 871h1v1h-1zM1152 871h1v1h-1zM1171 871h1v1h-1zM1189 871h1v1h-1zM1208 871h1v1h-1zM1227 871h1v1h-1zM1246 871h1v1h-1zM1265 871h1v1h-1zM1283 871h1v1h-1zM1302 871h1v1h-1zM1321 871h1v1h-1zM1340 871h1v1h-1zM1359 871h1v1h-1zM119 890h1v1h-1zM137 890h1v1h-1zM156 890h1v1h-1zM175 890h1v1h-1zM194 890h1v1h-1zM213 890h1v1h-1zM231 890h1v1h-1zM250 890h1v1h-1zM269 890h1v1h-1zM288 890h1v1h-1zM307 890h1v1h-1zM325 890h1v1h-1zM344 890h1v1h-1zM363 890h1v1h-1zM382 890h1v1h-1zM400 890h1v1h-1zM419 890h1v1h-1zM438 890h1v1h-1zM457 890h1v1h-1zM476 890h1v1h-1zM494 890h1v1h-1zM513 890h1v1h-1zM532 890h1v1h-1zM551 890h1v1h-1zM570 890h1v1h-1zM588 890h1v1h-1zM607 890h1v1h-1zM626 890h1v1h-1zM645 890h1v1h-1zM663 890h1v1h-1zM682 890h1v1h-1zM701 890h1v1h-1zM720 890h1v1h-1zM739 890h1v1h-1zM757 890h1v1h-1zM776 890h1v1h-1zM795 890h1v1h-1zM814 890h1v1h-1zM833 890h1v1h-1zM851 890h1v1h-1zM870 890h1v1h-1zM889 890h1v1h-1zM908 890h1v1h-1zM926 890h1v1h-1zM945 890h1v1h-1zM964 890h1v1h-1zM983 890h1v1h-1zM1002 890h1v1h-1zM1020 890h1v1h-1zM1039 890h1v1h-1zM1058 890h1v1h-1zM1077 890h1v1h-1zM1096 890h1v1h-1zM1114 890h1v1h-1zM1133 890h1v1h-1zM1152 890h1v1h-1zM1171 890h1v1h-1zM1189 890h1v1h-1zM1208 890h1v1h-1zM1227 890h1v1h-1zM1246 890h1v1h-1zM1265 890h1v1h-1zM1283 890h1v1h-1zM1302 890h1v1h-1zM1321 890h1v1h-1zM1340 890h1v1h-1zM1359 890h1v1h-1zM119 909h1v1h-1zM137 909h1v1h-1zM156 909h1v1h-1zM175 909h1v1h-1zM194 909h1v1h-1zM213 909h1v1h-1zM231 909h1v1h-1zM250 909h1v1h-1zM269 909h1v1h-1zM288 909h1v1h-1zM307 909h1v1h-1zM325 909h1v1h-1zM344 909h1v1h-1zM363 909h1v1h-1zM382 909h1v1h-1zM400 909h1v1h-1zM419 909h1v1h-1zM438 909h1v1h-1zM457 909h1v1h-1zM476 909h1v1h-1zM494 909h1v1h-1zM513 909h1v1h-1zM532 909h1v1h-1zM551 909h1v1h-1zM570 909h1v1h-1zM588 909h1v1h-1zM607 909h1v1h-1zM626 909h1v1h-1zM645 909h1v1h-1zM663 909h1v1h-1zM682 909h1v1h-1zM701 909h1v1h-1zM720 909h1v1h-1zM739 909h1v1h-1zM757 909h1v1h-1zM776 909h1v1h-1zM795 909h1v1h-1zM814 909h1v1h-1zM833 909h1v1h-1zM851 909h1v1h-1zM870 909h1v1h-1zM889 909h1v1h-1zM908 909h1v1h-1zM926 909h1v1h-1zM945 909h1v1h-1zM964 909h1v1h-1zM983 909h1v1h-1zM1002 909h1v1h-1zM1020 909h1v1h-1zM1039 909h1v1h-1zM1058 909h1v1h-1zM1077 909h1v1h-1zM1096 909h1v1h-1zM1114 909h1v1h-1zM1133 909h1v1h-1zM1152 909h1v1h-1zM1171 909h1v1h-1zM1189 909h1v1h-1zM1208 909h1v1h-1zM1227 909h1v1h-1zM1246 909h1v1h-1zM1265 909h1v1h-1zM1283 909h1v1h-1zM1302 909h1v1h-1zM1321 909h1v1h-1zM1340 909h1v1h-1zM1359 909h1v1h-1zM119 928h1v1h-1zM137 928h1v1h-1zM156 928h1v1h-1zM175 928h1v1h-1zM194 928h1v1h-1zM213 928h1v1h-1zM231 928h1v1h-1zM250 928h1v1h-1zM269 928h1v1h-1zM288 928h1v1h-1zM307 928h1v1h-1zM325 928h1v1h-1zM344 928h1v1h-1zM363 928h1v1h-1zM382 928h1v1h-1zM400 928h1v1h-1zM419 928h1v1h-1zM438 928h1v1h-1zM457 928h1v1h-1zM476 928h1v1h-1zM494 928h1v1h-1zM513 928h1v1h-1zM532 928h1v1h-1zM551 928h1v1h-1zM570 928h1v1h-1zM588 928h1v1h-1zM607 928h1v1h-1zM626 928h1v1h-1zM645 928h1v1h-1zM663 928h1v1h-1zM682 928h1v1h-1zM701 928h1v1h-1zM720 928h1v1h-1zM739 928h1v1h-1zM757 928h1v1h-1zM776 928h1v1h-1zM795 928h1v1h-1zM814 928h1v1h-1zM833 928h1v1h-1zM851 928h1v1h-1zM870 928h1v1h-1zM889 928h1v1h-1zM908 928h1v1h-1zM926 928h1v1h-1zM945 928h1v1h-1zM964 928h1v1h-1zM983 928h1v1h-1zM1002 928h1v1h-1zM1020 928h1v1h-1zM1039 928h1v1h-1zM1058 928h1v1h-1zM1077 928h1v1h-1zM1096 928h1v1h-1zM1114 928h1v1h-1zM1133 928h1v1h-1zM1152 928h1v1h-1zM1171 928h1v1h-1zM1189 928h1v1h-1zM1208 928h1v1h-1zM1227 928h1v1h-1zM1246 928h1v1h-1zM1265 928h1v1h-1zM1283 928h1v1h-1zM1302 928h1v1h-1zM1321 928h1v1h-1zM1340 928h1v1h-1zM1359 928h1v1h-1zM119 946h1v1h-1zM137 946h1v1h-1zM156 946h1v1h-1zM175 946h1v1h-1zM194 946h1v1h-1zM213 946h1v1h-1zM231 946h1v1h-1zM250 946h1v1h-1zM269 946h1v1h-1zM288 946h1v1h-1zM307 946h1v1h-1zM325 946h1v1h-1zM344 946h1v1h-1zM363 946h1v1h-1zM382 946h1v1h-1zM400 946h1v1h-1zM419 946h1v1h-1zM438 946h1v1h-1zM457 946h1v1h-1zM476 946h1v1h-1zM494 946h1v1h-1zM513 946h1v1h-1zM532 946h1v1h-1zM551 946h1v1h-1zM570 946h1v1h-1zM588 946h1v1h-1zM607 946h1v1h-1zM626 946h1v1h-1zM645 946h1v1h-1zM663 946h1v1h-1zM682 946h1v1h-1zM701 946h1v1h-1zM720 946h1v1h-1zM739 946h1v1h-1zM757 946h1v1h-1zM776 946h1v1h-1zM795 946h1v1h-1zM814 946h1v1h-1zM833 946h1v1h-1zM851 946h1v1h-1zM870 946h1v1h-1zM889 946h1v1h-1zM908 946h1v1h-1zM926 946h1v1h-1zM945 946h1v1h-1zM964 946h1v1h-1zM983 946h1v1h-1zM1002 946h1v1h-1zM1020 946h1v1h-1zM1039 946h1v1h-1zM1058 946h1v1h-1zM1077 946h1v1h-1zM1096 946h1v1h-1zM1114 946h1v1h-1zM1133 946h1v1h-1zM1152 946h1v1h-1zM1171 946h1v1h-1zM1189 946h1v1h-1zM1208 946h1v1h-1zM1227 946h1v1h-1zM1246 946h1v1h-1zM1265 946h1v1h-1zM1283 946h1v1h-1zM1302 946h1v1h-1zM1321 946h1v1h-1zM1340 946h1v1h-1zM1359 946h1v1h-1zM119 965h1v1h-1zM137 965h1v1h-1zM156 965h1v1h-1zM175 965h1v1h-1zM194 965h1v1h-1zM213 965h1v1h-1zM231 965h1v1h-1zM250 965h1v1h-1zM269 965h1v1h-1zM288 965h1v1h-1zM307 965h1v1h-1zM325 965h1v1h-1zM344 965h1v1h-1zM363 965h1v1h-1zM382 965h1v1h-1zM400 965h1v1h-1zM419 965h1v1h-1zM438 965h1v1h-1zM457 965h1v1h-1zM476 965h1v1h-1zM494 965h1v1h-1zM513 965h1v1h-1zM532 965h1v1h-1zM551 965h1v1h-1zM570 965h1v1h-1zM588 965h1v1h-1zM607 965h1v1h-1zM626 965h1v1h-1zM645 965h1v1h-1zM663 965h1v1h-1zM682 965h1v1h-1zM701 965h1v1h-1zM720 965h1v1h-1zM739 965h1v1h-1zM757 965h1v1h-1zM776 965h1v1h-1zM795 965h1v1h-1zM814 965h1v1h-1zM833 965h1v1h-1zM851 965h1v1h-1zM870 965h1v1h-1zM889 965h1v1h-1zM908 965h1v1h-1zM926 965h1v1h-1zM945 965h1v1h-1zM964 965h1v1h-1zM983 965h1v1h-1zM1002 965h1v1h-1zM1020 965h1v1h-1zM1039 965h1v1h-1zM1058 965h1v1h-1zM1077 965h1v1h-1zM1096 965h1v1h-1zM1114 965h1v1h-1zM1133 965h1v1h-1zM1152 965h1v1h-1zM1171 965h1v1h-1zM1189 965h1v1h-1zM1208 965h1v1h-1zM1227 965h1v1h-1zM1246 965h1v1h-1zM1265 965h1v1h-1zM1283 965h1v1h-1zM1302 965h1v1h-1zM1321 965h1v1h-1zM1340 965h1v1h-1zM1359 965h1v1h-1zM119 984h1v1h-1zM137 984h1v1h-1zM156 984h1v1h-1zM175 984h1v1h-1zM194 984h1v1h-1zM213 984h1v1h-1zM231 984h1v1h-1zM250 984h1v1h-1zM269 984h1v1h-1zM288 984h1v1h-1zM307 984h1v1h-1zM325 984h1v1h-1zM344 984h1v1h-1zM363 984h1v1h-1zM382 984h1v1h-1zM400 984h1v1h-1zM419 984h1v1h-1zM438 984h1v1h-1zM457 984h1v1h-1zM476 984h1v1h-1zM494 984h1v1h-1zM513 984h1v1h-1zM532 984h1v1h-1zM551 984h1v1h-1zM570 984h1v1h-1zM588 984h1v1h-1zM607 984h1v1h-1zM626 984h1v1h-1zM645 984h1v1h-1zM663 984h1v1h-1zM682 984h1v1h-1zM701 984h1v1h-1zM720 984h1v1h-1zM739 984h1v1h-1zM757 984h1v1h-1zM776 984h1v1h-1zM795 984h1v1h-1zM814 984h1v1h-1zM833 984h1v1h-1zM851 984h1v1h-1zM870 984h1v1h-1zM889 984h1v1h-1zM908 984h1v1h-1zM926 984h1v1h-1zM945 984h1v1h-1zM964 984h1v1h-1zM983 984h1v1h-1zM1002 984h1v1h-1zM1020 984h1v1h-1zM1039 984h1v1h-1zM1058 984h1v1h-1zM1077 984h1v1h-1zM1096 984h1v1h-1zM1114 984h1v1h-1zM1133 984h1v1h-1zM1152 984h1v1h-1zM1171 984h1v1h-1zM1189 984h1v1h-1zM1208 984h1v1h-1zM1227 984h1v1h-1zM1246 984h1v1h-1zM1265 984h1v1h-1zM1283 984h1v1h-1zM1302 984h1v1h-1zM1321 984h1v1h-1zM1340 984h1v1h-1zM1359 984h1v1h-1zM119 1003h1v1h-1zM137 1003h1v1h-1zM156 1003h1v1h-1zM175 1003h1v1h-1zM194 1003h1v1h-1zM213 1003h1v1h-1zM231 1003h1v1h-1zM250 1003h1v1h-1zM269 1003h1v1h-1zM288 1003h1v1h-1zM307 1003h1v1h-1zM325 1003h1v1h-1zM344 1003h1v1h-1zM363 1003h1v1h-1zM382 1003h1v1h-1zM400 1003h1v1h-1zM419 1003h1v1h-1zM438 1003h1v1h-1zM457 1003h1v1h-1zM476 1003h1v1h-1zM494 1003h1v1h-1zM513 1003h1v1h-1zM532 1003h1v1h-1zM551 1003h1v1h-1zM570 1003h1v1h-1zM588 1003h1v1h-1zM607 1003h1v1h-1zM626 1003h1v1h-1zM645 1003h1v1h-1zM663 1003h1v1h-1zM682 1003h1v1h-1zM701 1003h1v1h-1zM720 1003h1v1h-1zM739 1003h1v1h-1zM757 1003h1v1h-1zM776 1003h1v1h-1zM795 1003h1v1h-1zM814 1003h1v1h-1zM833 1003h1v1h-1zM851 1003h1v1h-1zM870 1003h1v1h-1zM889 1003h1v1h-1zM908 1003h1v1h-1zM926 1003h1v1h-1zM945 1003h1v1h-1zM964 1003h1v1h-1zM983 1003h1v1h-1zM1002 1003h1v1h-1zM1020 1003h1v1h-1zM1039 1003h1v1h-1zM1058 1003h1v1h-1zM1077 1003h1v1h-1zM1096 1003h1v1h-1zM1114 1003h1v1h-1zM1133 1003h1v1h-1zM1152 1003h1v1h-1zM1171 1003h1v1h-1zM1189 1003h1v1h-1zM1208 1003h1v1h-1zM1227 1003h1v1h-1zM1246 1003h1v1h-1zM1265 1003h1v1h-1zM1283 1003h1v1h-1zM1302 1003h1v1h-1zM1321 1003h1v1h-1zM1340 1003h1v1h-1zM1359 1003h1v1h-1zM119 1021h1v1h-1zM137 1021h1v1h-1zM156 1021h1v1h-1zM175 1021h1v1h-1zM194 1021h1v1h-1zM213 1021h1v1h-1zM231 1021h1v1h-1zM250 1021h1v1h-1zM269 1021h1v1h-1zM288 1021h1v1h-1zM307 1021h1v1h-1zM325 1021h1v1h-1zM344 1021h1v1h-1zM363 1021h1v1h-1zM382 1021h1v1h-1zM400 1021h1v1h-1zM419 1021h1v1h-1zM438 1021h1v1h-1zM457 1021h1v1h-1zM476 1021h1v1h-1zM494 1021h1v1h-1zM513 1021h1v1h-1zM532 1021h1v1h-1zM551 1021h1v1h-1zM570 1021h1v1h-1zM588 1021h1v1h-1zM607 1021h1v1h-1zM626 1021h1v1h-1zM645 1021h1v1h-1zM663 1021h1v1h-1zM682 1021h1v1h-1zM701 1021h1v1h-1zM720 1021h1v1h-1zM739 1021h1v1h-1zM757 1021h1v1h-1zM776 1021h1v1h-1zM795 1021h1v1h-1zM814 1021h1v1h-1zM833 1021h1v1h-1zM851 1021h1v1h-1zM870 1021h1v1h-1zM889 1021h1v1h-1zM908 1021h1v1h-1zM926 1021h1v1h-1zM945 1021h1v1h-1zM964 1021h1v1h-1zM983 1021h1v1h-1zM1002 1021h1v1h-1zM1020 1021h1v1h-1zM1039 1021h1v1h-1zM1058 1021h1v1h-1zM1077 1021h1v1h-1zM1096 1021h1v1h-1zM1114 1021h1v1h-1zM1133 1021h1v1h-1zM1152 1021h1v1h-1zM1171 1021h1v1h-1zM1189 1021h1v1h-1zM1208 1021h1v1h-1zM1227 1021h1v1h-1zM1246 1021h1v1h-1zM1265 1021h1v1h-1zM1283 1021h1v1h-1zM1302 1021h1v1h-1zM1321 1021h1v1h-1zM1340 1021h1v1h-1zM1359 1021h1v1h-1zM119 1040h1v1h-1zM137 1040h1v1h-1zM156 1040h1v1h-1zM175 1040h1v1h-1zM194 1040h1v1h-1zM213 1040h1v1h-1zM231 1040h1v1h-1zM250 1040h1v1h-1zM269 1040h1v1h-1zM288 1040h1v1h-1zM307 1040h1v1h-1zM325 1040h1v1h-1zM344 1040h1v1h-1zM363 1040h1v1h-1zM382 1040h1v1h-1zM400 1040h1v1h-1zM419 1040h1v1h-1zM438 1040h1v1h-1zM457 1040h1v1h-1zM476 1040h1v1h-1zM494 1040h1v1h-1zM513 1040h1v1h-1zM532 1040h1v1h-1zM551 1040h1v1h-1zM570 1040h1v1h-1zM588 1040h1v1h-1zM607 1040h1v1h-1zM626 1040h1v1h-1zM645 1040h1v1h-1zM663 1040h1v1h-1zM682 1040h1v1h-1zM701 1040h1v1h-1zM720 1040h1v1h-1zM739 1040h1v1h-1zM757 1040h1v1h-1zM776 1040h1v1h-1zM795 1040h1v1h-1zM814 1040h1v1h-1zM833 1040h1v1h-1zM851 1040h1v1h-1zM870 1040h1v1h-1zM889 1040h1v1h-1zM908 1040h1v1h-1zM926 1040h1v1h-1zM945 1040h1v1h-1zM964 1040h1v1h-1zM983 1040h1v1h-1zM1002 1040h1v1h-1zM1020 1040h1v1h-1zM1039 1040h1v1h-1zM1058 1040h1v1h-1zM1077 1040h1v1h-1zM1096 1040h1v1h-1zM1114 1040h1v1h-1zM1133 1040h1v1h-1zM1152 1040h1v1h-1zM1171 1040h1v1h-1zM1189 1040h1v1h-1zM1208 1040h1v1h-1zM1227 1040h1v1h-1zM1246 1040h1v1h-1zM1265 1040h1v1h-1zM1283 1040h1v1h-1zM1302 1040h1v1h-1zM1321 1040h1v1h-1zM1340 1040h1v1h-1zM1359 1040h1v1h-1zM119 1059h1v1h-1zM137 1059h1v1h-1zM156 1059h1v1h-1zM175 1059h1v1h-1zM194 1059h1v1h-1zM213 1059h1v1h-1zM231 1059h1v1h-1zM250 1059h1v1h-1zM269 1059h1v1h-1zM288 1059h1v1h-1zM307 1059h1v1h-1zM325 1059h1v1h-1zM344 1059h1v1h-1zM363 1059h1v1h-1zM382 1059h1v1h-1zM400 1059h1v1h-1zM419 1059h1v1h-1zM438 1059h1v1h-1zM457 1059h1v1h-1zM476 1059h1v1h-1zM494 1059h1v1h-1zM513 1059h1v1h-1zM532 1059h1v1h-1zM551 1059h1v1h-1zM570 1059h1v1h-1zM588 1059h1v1h-1zM607 1059h1v1h-1zM626 1059h1v1h-1zM645 1059h1v1h-1zM663 1059h1v1h-1zM682 1059h1v1h-1zM701 1059h1v1h-1zM720 1059h1v1h-1zM739 1059h1v1h-1zM757 1059h1v1h-1zM776 1059h1v1h-1zM795 1059h1v1h-1zM814 1059h1v1h-1zM833 1059h1v1h-1zM851 1059h1v1h-1zM870 1059h1v1h-1zM889 1059h1v1h-1zM908 1059h1v1h-1zM926 1059h1v1h-1zM945 1059h1v1h-1zM964 1059h1v1h-1zM983 1059h1v1h-1zM1002 1059h1v1h-1zM1020 1059h1v1h-1zM1039 1059h1v1h-1zM1058 1059h1v1h-1zM1077 1059h1v1h-1zM1096 1059h1v1h-1zM1114 1059h1v1h-1zM1133 1059h1v1h-1zM1152 1059h1v1h-1zM1171 1059h1v1h-1zM1189 1059h1v1h-1zM1208 1059h1v1h-1zM1227 1059h1v1h-1zM1246 1059h1v1h-1zM1265 1059h1v1h-1zM1283 1059h1v1h-1zM1302 1059h1v1h-1zM1321 1059h1v1h-1zM1340 1059h1v1h-1zM1359 1059h1v1h-1zM119 1078h1v1h-1zM137 1078h1v1h-1zM156 1078h1v1h-1zM175 1078h1v1h-1zM194 1078h1v1h-1zM213 1078h1v1h-1zM231 1078h1v1h-1zM250 1078h1v1h-1zM269 1078h1v1h-1zM288 1078h1v1h-1zM307 1078h1v1h-1zM325 1078h1v1h-1zM344 1078h1v1h-1zM363 1078h1v1h-1zM382 1078h1v1h-1zM400 1078h1v1h-1zM419 1078h1v1h-1zM438 1078h1v1h-1zM457 1078h1v1h-1zM476 1078h1v1h-1zM494 1078h1v1h-1zM513 1078h1v1h-1zM532 1078h1v1h-1zM551 1078h1v1h-1zM570 1078h1v1h-1zM588 1078h1v1h-1zM607 1078h1v1h-1zM626 1078h1v1h-1zM645 1078h1v1h-1zM663 1078h1v1h-1zM682 1078h1v1h-1zM701 1078h1v1h-1zM720 1078h1v1h-1zM739 1078h1v1h-1zM757 1078h1v1h-1zM776 1078h1v1h-1zM795 1078h1v1h-1zM814 1078h1v1h-1zM833 1078h1v1h-1zM851 1078h1v1h-1zM870 1078h1v1h-1zM889 1078h1v1h-1zM908 1078h1v1h-1zM926 1078h1v1h-1zM945 1078h1v1h-1zM964 1078h1v1h-1zM983 1078h1v1h-1zM1002 1078h1v1h-1zM1020 1078h1v1h-1zM1039 1078h1v1h-1zM1058 1078h1v1h-1zM1077 1078h1v1h-1zM1096 1078h1v1h-1zM1114 1078h1v1h-1zM1133 1078h1v1h-1zM1152 1078h1v1h-1zM1171 1078h1v1h-1zM1189 1078h1v1h-1zM1208 1078h1v1h-1zM1227 1078h1v1h-1zM1246 1078h1v1h-1zM1265 1078h1v1h-1zM1283 1078h1v1h-1zM1302 1078h1v1h-1zM1321 1078h1v1h-1zM1340 1078h1v1h-1zM1359 1078h1v1h-1zM119 1097h1v1h-1zM137 1097h1v1h-1zM156 1097h1v1h-1zM175 1097h1v1h-1zM194 1097h1v1h-1zM213 1097h1v1h-1zM231 1097h1v1h-1zM250 1097h1v1h-1zM269 1097h1v1h-1zM288 1097h1v1h-1zM307 1097h1v1h-1zM325 1097h1v1h-1zM344 1097h1v1h-1zM363 1097h1v1h-1zM382 1097h1v1h-1zM400 1097h1v1h-1zM419 1097h1v1h-1zM438 1097h1v1h-1zM457 1097h1v1h-1zM476 1097h1v1h-1zM494 1097h1v1h-1zM513 1097h1v1h-1zM532 1097h1v1h-1zM551 1097h1v1h-1zM570 1097h1v1h-1zM588 1097h1v1h-1zM607 1097h1v1h-1zM626 1097h1v1h-1zM645 1097h1v1h-1zM663 1097h1v1h-1zM682 1097h1v1h-1zM701 1097h1v1h-1zM720 1097h1v1h-1zM739 1097h1v1h-1zM757 1097h1v1h-1zM776 1097h1v1h-1zM795 1097h1v1h-1zM814 1097h1v1h-1zM833 1097h1v1h-1zM851 1097h1v1h-1zM870 1097h1v1h-1zM889 1097h1v1h-1zM908 1097h1v1h-1zM926 1097h1v1h-1zM945 1097h1v1h-1zM964 1097h1v1h-1zM983 1097h1v1h-1zM1002 1097h1v1h-1zM1020 1097h1v1h-1zM1039 1097h1v1h-1zM1058 1097h1v1h-1zM1077 1097h1v1h-1zM1096 1097h1v1h-1zM1114 1097h1v1h-1zM1133 1097h1v1h-1zM1152 1097h1v1h-1zM1171 1097h1v1h-1zM1189 1097h1v1h-1zM1208 1097h1v1h-1zM1227 1097h1v1h-1zM1246 1097h1v1h-1zM1265 1097h1v1h-1zM1283 1097h1v1h-1zM1302 1097h1v1h-1zM1321 1097h1v1h-1zM1340 1097h1v1h-1zM1359 1097h1v1h-1zM119 1115h1v1h-1zM137 1115h1v1h-1zM156 1115h1v1h-1zM175 1115h1v1h-1zM194 1115h1v1h-1zM213 1115h1v1h-1zM231 1115h1v1h-1zM250 1115h1v1h-1zM269 1115h1v1h-1zM288 1115h1v1h-1zM307 1115h1v1h-1zM325 1115h1v1h-1zM344 1115h1v1h-1zM363 1115h1v1h-1zM382 1115h1v1h-1zM400 1115h1v1h-1zM419 1115h1v1h-1zM438 1115h1v1h-1zM457 1115h1v1h-1zM476 1115h1v1h-1zM494 1115h1v1h-1zM513 1115h1v1h-1zM532 1115h1v1h-1zM551 1115h1v1h-1zM570 1115h1v1h-1zM588 1115h1v1h-1zM607 1115h1v1h-1zM626 1115h1v1h-1zM645 1115h1v1h-1zM663 1115h1v1h-1zM682 1115h1v1h-1zM701 1115h1v1h-1zM720 1115h1v1h-1zM739 1115h1v1h-1zM757 1115h1v1h-1zM776 1115h1v1h-1zM795 1115h1v1h-1zM814 1115h1v1h-1zM833 1115h1v1h-1zM851 1115h1v1h-1zM870 1115h1v1h-1zM889 1115h1v1h-1zM908 1115h1v1h-1zM926 1115h1v1h-1zM945 1115h1v1h-1zM964 1115h1v1h-1zM983 1115h1v1h-1zM1002 1115h1v1h-1zM1020 1115h1v1h-1zM1039 1115h1v1h-1zM1058 1115h1v1h-1zM1077 1115h1v1h-1zM1096 1115h1v1h-1zM1114 1115h1v1h-1zM1133 1115h1v1h-1zM1152 1115h1v1h-1zM1171 1115h1v1h-1zM1189 1115h1v1h-1zM1208 1115h1v1h-1zM1227 1115h1v1h-1zM1246 1115h1v1h-1zM1265 1115h1v1h-1zM1283 1115h1v1h-1zM1302 1115h1v1h-1zM1321 1115h1v1h-1zM1340 1115h1v1h-1zM1359 1115h1v1h-1zM119 1134h1v1h-1zM137 1134h1v1h-1zM156 1134h1v1h-1zM175 1134h1v1h-1zM194 1134h1v1h-1zM213 1134h1v1h-1zM231 1134h1v1h-1zM250 1134h1v1h-1zM269 1134h1v1h-1zM288 1134h1v1h-1zM307 1134h1v1h-1zM325 1134h1v1h-1zM344 1134h1v1h-1zM363 1134h1v1h-1zM382 1134h1v1h-1zM400 1134h1v1h-1zM419 1134h1v1h-1zM438 1134h1v1h-1zM457 1134h1v1h-1zM476 1134h1v1h-1zM494 1134h1v1h-1zM513 1134h1v1h-1zM532 1134h1v1h-1zM551 1134h1v1h-1zM570 1134h1v1h-1zM588 1134h1v1h-1zM607 1134h1v1h-1zM626 1134h1v1h-1zM645 1134h1v1h-1zM663 1134h1v1h-1zM682 1134h1v1h-1zM701 1134h1v1h-1zM720 1134h1v1h-1zM739 1134h1v1h-1zM757 1134h1v1h-1zM776 1134h1v1h-1zM795 1134h1v1h-1zM814 1134h1v1h-1zM833 1134h1v1h-1zM851 1134h1v1h-1zM870 1134h1v1h-1zM889 1134h1v1h-1zM908 1134h1v1h-1zM926 1134h1v1h-1zM945 1134h1v1h-1zM964 1134h1v1h-1zM983 1134h1v1h-1zM1002 1134h1v1h-1zM1020 1134h1v1h-1zM1039 1134h1v1h-1zM1058 1134h1v1h-1zM1077 1134h1v1h-1zM1096 1134h1v1h-1zM1114 1134h1v1h-1zM1133 1134h1v1h-1zM1152 1134h1v1h-1zM1171 1134h1v1h-1zM1189 1134h1v1h-1zM1208 1134h1v1h-1zM1227 1134h1v1h-1zM1246 1134h1v1h-1zM1265 1134h1v1h-1zM1283 1134h1v1h-1zM1302 1134h1v1h-1zM1321 1134h1v1h-1zM1340 1134h1v1h-1zM1359 1134h1v1h-1zM119 1153h1v1h-1zM137 1153h1v1h-1zM156 1153h1v1h-1zM175 1153h1v1h-1zM194 1153h1v1h-1zM213 1153h1v1h-1zM231 1153h1v1h-1zM250 1153h1v1h-1zM269 1153h1v1h-1zM288 1153h1v1h-1zM307 1153h1v1h-1zM325 1153h1v1h-1zM344 1153h1v1h-1zM363 1153h1v1h-1zM382 1153h1v1h-1zM400 1153h1v1h-1zM419 1153h1v1h-1zM438 1153h1v1h-1zM457 1153h1v1h-1zM476 1153h1v1h-1zM494 1153h1v1h-1zM513 1153h1v1h-1zM532 1153h1v1h-1zM551 1153h1v1h-1zM570 1153h1v1h-1zM588 1153h1v1h-1zM607 1153h1v1h-1zM626 1153h1v1h-1zM645 1153h1v1h-1zM663 1153h1v1h-1zM682 1153h1v1h-1zM701 1153h1v1h-1zM720 1153h1v1h-1zM739 1153h1v1h-1zM757 1153h1v1h-1zM776 1153h1v1h-1zM795 1153h1v1h-1zM814 1153h1v1h-1zM833 1153h1v1h-1zM851 1153h1v1h-1zM870 1153h1v1h-1zM889 1153h1v1h-1zM908 1153h1v1h-1zM926 1153h1v1h-1zM945 1153h1v1h-1zM964 1153h1v1h-1zM983 1153h1v1h-1zM1002 1153h1v1h-1zM1020 1153h1v1h-1zM1039 1153h1v1h-1zM1058 1153h1v1h-1zM1077 1153h1v1h-1zM1096 1153h1v1h-1zM1114 1153h1v1h-1zM1133 1153h1v1h-1zM1152 1153h1v1h-1zM1171 1153h1v1h-1zM1189 1153h1v1h-1zM1208 1153h1v1h-1zM1227 1153h1v1h-1zM1246 1153h1v1h-1zM1265 1153h1v1h-1zM1283 1153h1v1h-1zM1302 1153h1v1h-1zM1321 1153h1v1h-1zM1340 1153h1v1h-1zM1359 1153h1v1h-1zM119 1172h1v1h-1zM137 1172h1v1h-1zM156 1172h1v1h-1zM175 1172h1v1h-1zM194 1172h1v1h-1zM213 1172h1v1h-1zM231 1172h1v1h-1zM250 1172h1v1h-1zM269 1172h1v1h-1zM288 1172h1v1h-1zM307 1172h1v1h-1zM325 1172h1v1h-1zM344 1172h1v1h-1zM363 1172h1v1h-1zM382 1172h1v1h-1zM400 1172h1v1h-1zM419 1172h1v1h-1zM438 1172h1v1h-1zM457 1172h1v1h-1zM476 1172h1v1h-1zM494 1172h1v1h-1zM513 1172h1v1h-1zM532 1172h1v1h-1zM551 1172h1v1h-1zM570 1172h1v1h-1zM588 1172h1v1h-1zM607 1172h1v1h-1zM626 1172h1v1h-1zM645 1172h1v1h-1zM663 1172h1v1h-1zM682 1172h1v1h-1zM701 1172h1v1h-1zM720 1172h1v1h-1zM739 1172h1v1h-1zM757 1172h1v1h-1zM776 1172h1v1h-1zM795 1172h1v1h-1zM814 1172h1v1h-1zM833 1172h1v1h-1zM851 1172h1v1h-1zM870 1172h1v1h-1zM889 1172h1v1h-1zM908 1172h1v1h-1zM926 1172h1v1h-1zM945 1172h1v1h-1zM964 1172h1v1h-1zM983 1172h1v1h-1zM1002 1172h1v1h-1zM1020 1172h1v1h-1zM1039 1172h1v1h-1zM1058 1172h1v1h-1zM1077 1172h1v1h-1zM1096 1172h1v1h-1zM1114 1172h1v1h-1zM1133 1172h1v1h-1zM1152 1172h1v1h-1zM1171 1172h1v1h-1zM1189 1172h1v1h-1zM1208 1172h1v1h-1zM1227 1172h1v1h-1zM1246 1172h1v1h-1zM1265 1172h1v1h-1zM1283 1172h1v1h-1zM1302 1172h1v1h-1zM1321 1172h1v1h-1zM1340 1172h1v1h-1zM1359 1172h1v1h-1zM119 1191h1v1h-1zM137 1191h1v1h-1zM156 1191h1v1h-1zM175 1191h1v1h-1zM194 1191h1v1h-1zM213 1191h1v1h-1zM231 1191h1v1h-1zM250 1191h1v1h-1zM269 1191h1v1h-1zM288 1191h1v1h-1zM307 1191h1v1h-1zM325 1191h1v1h-1zM344 1191h1v1h-1zM363 1191h1v1h-1zM382 1191h1v1h-1zM400 1191h1v1h-1zM419 1191h1v1h-1zM438 1191h1v1h-1zM457 1191h1v1h-1zM476 1191h1v1h-1zM494 1191h1v1h-1zM513 1191h1v1h-1zM532 1191h1v1h-1zM551 1191h1v1h-1zM570 1191h1v1h-1zM588 1191h1v1h-1zM607 1191h1v1h-1zM626 1191h1v1h-1zM645 1191h1v1h-1zM663 1191h1v1h-1zM682 1191h1v1h-1zM701 1191h1v1h-1zM720 1191h1v1h-1zM739 1191h1v1h-1zM757 1191h1v1h-1zM776 1191h1v1h-1zM795 1191h1v1h-1zM814 1191h1v1h-1zM833 1191h1v1h-1zM851 1191h1v1h-1zM870 1191h1v1h-1zM889 1191h1v1h-1zM908 1191h1v1h-1zM926 1191h1v1h-1zM945 1191h1v1h-1zM964 1191h1v1h-1zM983 1191h1v1h-1zM1002 1191h1v1h-1zM1020 1191h1v1h-1zM1039 1191h1v1h-1zM1058 1191h1v1h-1zM1077 1191h1v1h-1zM1096 1191h1v1h-1zM1114 1191h1v1h-1zM1133 1191h1v1h-1zM1152 1191h1v1h-1zM1171 1191h1v1h-1zM1189 1191h1v1h-1zM1208 1191h1v1h-1zM1227 1191h1v1h-1zM1246 1191h1v1h-1zM1265 1191h1v1h-1zM1283 1191h1v1h-1zM1302 1191h1v1h-1zM1321 1191h1v1h-1zM1340 1191h1v1h-1zM1359 1191h1v1h-1z" fill="#b2b2b2" shape-rendering="crispEdges"/><g fill="none" stroke="#e57c7c" stroke-width="1"><path d="M349.8 495.5H1184.2A5.3 5.3 0 0 1 1189.5 500.8V538A13.5 13.5 0 0 1 1176 551.5H358A13.5 13.5 0 0 1 344.5 538V500.8A5.3 5.3 0 0 1 349.8 495.5Z"/><circle cx="372.5" cy="523.5" r="7.7"/><circle cx="766.5" cy="523.5" r="7.7"/><circle cx="1161.5" cy="523.5" r="7.7"/></g><g fill="none" stroke="#000" stroke-width="1"><path d="M350.1 626.5H1183.9A5.6 5.6 0 0 1 1189.5 632.1V665.3A18.2 18.2 0 0 1 1171.3 683.5H1151.7A18.2 18.2 0 0 1 1133.5 665.3V645.5H1035.5V669A14.5 14.5 0 0 1 1021 683.5H513A14.5 14.5 0 0 1 498.5 669V645.5H400.5V665.3A18.2 18.2 0 0 1 382.3 683.5H362.7A18.2 18.2 0 0 1 344.5 665.3V632.1A5.6 5.6 0 0 1 350.1 626.5Z"/><circle cx="372.5" cy="655.5" r="9.4"/><circle cx="766.5" cy="655.5" r="9.4"/><circle cx="1161.5" cy="655.5" r="9.4"/></g><g fill="none" stroke="#000" stroke-width="1"><path d="M350.1 683.5H1183.9A5.6 5.6 0 0 1 1189.5 689.1V721.3A18.2 18.2 0 0 1 1171.3 739.5H1151.7A18.2 18.2 0 0 1 1133.5 721.3V702.5H1035.5V725A14.5 14.5 0 0 1 1021 739.5H513A14.5 14.5 0 0 1 498.5 725V702.5H400.5V721.3A18.2 18.2 0 0 1 382.3 739.5H362.7A18.2 18.2 0 0 1 344.5 721.3V689.1A5.6 5.6 0 0 1 350.1 683.5Z"/><circle cx="372.5" cy="711.5" r="9.4"/><circle cx="766.5" cy="711.5" r="9.4"/><circle cx="1161.5" cy="711.5" r="9.4"/></g><g fill="none" stroke="#000" stroke-width="1"><path d="M350.1 739.5H1183.9A5.6 5.6 0 0 1 1189.5 745.1V778.3A18.2 18.2 0 0 1 1171.3 796.5H1151.7A18.2 18.2 0 0 1 1133.5 778.3V758.5H1035.5V782A14.5 14.5 0 0 1 1021 796.5H513A14.5 14.5 0 0 1 498.5 782V758.5H400.5V778.3A18.2 18.2 0 0 1 382.3 796.5H362.7A18.2 18.2 0 0 1 344.5 778.3V745.1A5.6 5.6 0 0 1 350.1 739.5Z"/><circle cx="372.5" cy="767.5" r="7.7"/><circle cx="766.5" cy="767.5" r="7.7"/><circle cx="1161.5" cy="767.5" r="7.7"/></g><g fill="none" stroke="#000" stroke-width="1"><path d="M350.1 796.5H1183.9A5.6 5.6 0 0 1 1189.5 802.1V834.3A18.2 18.2 0 0 1 1171.3 852.5H1151.7A18.2 18.2 0 0 1 1133.5 834.3V814.5H1035.5V838A14.5 14.5 0 0 1 1021 852.5H513A14.5 14.5 0 0 1 498.5 838V814.5H400.5V834.3A18.2 18.2 0 0 1 382.3 852.5H362.7A18.2 18.2 0 0 1 344.5 834.3V802.1A5.6 5.6 0 0 1 350.1 796.5Z"/><circle cx="372.5" cy="824.5" r="7.7"/><circle cx="766.5" cy="824.5" r="7.7"/><circle cx="1161.5" cy="824.5" r="7.7"/></g><path d="M117 551.5H1374M766.5 120V1204" stroke="#f8cc52" stroke-width="1" stroke-dasharray="4 2" fill="none"/><g fill="none" stroke="#701e1e" stroke-width="1.1"><path d="M349.8 551.5H1184.2A5.3 5.3 0 0 1 1189.5 556.8V593.5A15 15 0 0 1 1174.5 608.5H359.5A15 15 0 0 1 344.5 593.5V556.8A5.3 5.3 0 0 1 349.8 551.5Z"/><circle cx="372.5" cy="580.5" r="7.7"/><circle cx="766.5" cy="580.5" r="7.7"/><circle cx="1161.5" cy="580.5" r="7.7"/></g><path d="M350.5 551.5H1183.5" stroke="#e8a030" stroke-width="1" stroke-dasharray="4 2" stroke-dashoffset="5.5" fill="none"/><path d="M324.5 382.5H365.5M344.5 362.5V403.5" stroke="#ff2a2a" stroke-width="1" fill="none"/><rect x="339.5" y="603.5" width="10" height="10" fill="#0000b4" stroke="#8a8a9a" stroke-width="1"/><g fill="none" stroke="#c81e1e" stroke-width="1"><circle cx="766.5" cy="608.5" r="5"/><path d="M761.5 608.5h10M766.5 603.5v10"/></g><circle cx="766.5" cy="551.5" r="5.5" fill="none" stroke="#f5b820" stroke-width="1.2"/><text x="776" y="574" font-family="Liberation Sans" font-size="12" fill="#f0b41e">Middle</text><path d="M763 557 L763 574 L767.5 570 L771 577.5 L774.5 576 L771 568.5 H776 Z" fill="#000" opacity="0.12"/><path d="M762 554 V572.5 L766.5 568.5 L770.2 576 L773.8 574.5 L770.3 567 H775.5 Z" fill="#111" stroke="#fff" stroke-width="2" stroke-linejoin="round" paint-order="stroke"/></svg>
<svg style="left:40px;top:67px" width="18" height="6"><rect x="1" y="1" width="1" height="1" fill="#b0b0b0"/><rect x="1" y="4" width="1" height="1" fill="#b0b0b0"/><rect x="4" y="1" width="1" height="1" fill="#b0b0b0"/><rect x="4" y="4" width="1" height="1" fill="#b0b0b0"/><rect x="7" y="1" width="1" height="1" fill="#b0b0b0"/><rect x="7" y="4" width="1" height="1" fill="#b0b0b0"/><rect x="10" y="1" width="1" height="1" fill="#b0b0b0"/><rect x="10" y="4" width="1" height="1" fill="#b0b0b0"/><rect x="13" y="1" width="1" height="1" fill="#b0b0b0"/><rect x="13" y="4" width="1" height="1" fill="#b0b0b0"/><rect x="16" y="1" width="1" height="1" fill="#b0b0b0"/><rect x="16" y="4" width="1" height="1" fill="#b0b0b0"/></svg>
<div class="tb" style="left:8px;top:76px;width:80px;height:30px"><svg style="left:-1px;top:-1px" width="80" height="30"><path d="M35 15L44.7 10.4V19.3Z" fill="#000"/></svg></div>
<div class="tb" style="left:8px;top:116px;width:40px;height:40px"><svg style="left:-1px;top:-1px" width="40" height="40" viewBox="0 0 40 40"><path d="M15 19.5h9M19.5 15v9" stroke="#000" stroke-width="1.1"/></svg></div>
<div class="tb" style="left:47px;top:116px;width:41px;height:40px"><svg style="left:0px;top:-1px" width="41" height="40" viewBox="0 0 41 40"><circle cx="8" cy="7.9" r="2.1" fill="#ff0000"/><circle cx="8" cy="15.850000000000001" r="2.1" fill="#ff0000"/><circle cx="8" cy="23.8" r="2.1" fill="#ff0000"/><circle cx="8" cy="31.75" r="2.1" fill="#ff0000"/><circle cx="16" cy="7.9" r="2.1" fill="#ff0000"/><circle cx="16" cy="15.850000000000001" r="2.1" fill="#ff0000"/><circle cx="16" cy="23.8" r="2.1" fill="#ff0000"/><circle cx="16" cy="31.75" r="2.1" fill="#ff0000"/><circle cx="24" cy="7.9" r="2.1" fill="#ff0000"/><circle cx="24" cy="15.850000000000001" r="2.1" fill="#ff0000"/><circle cx="24" cy="23.8" r="2.1" fill="#ff0000"/><circle cx="24" cy="31.75" r="2.1" fill="#ff0000"/><circle cx="32" cy="7.9" r="2.1" fill="#ff0000"/><circle cx="32" cy="15.850000000000001" r="2.1" fill="#ff0000"/><circle cx="32" cy="23.8" r="2.1" fill="#ff0000"/><circle cx="32" cy="31.75" r="2.1" fill="#ff0000"/></svg></div>
<div class="tb" style="left:8px;top:164px;width:40px;height:40px"><svg style="left:-1px;top:-1px" width="40" height="40" viewBox="0 0 40 40"><path d="M7.6 19L31.7 31.7M17.4 7.9Q18.5 22 31.7 22.5" stroke="#111" stroke-width="1.1" fill="none"/><circle cx="7.6" cy="19" r="2.0" fill="#ff0000"/><circle cx="31.7" cy="31.7" r="2.0" fill="#ff0000"/><circle cx="17.4" cy="7.9" r="2.0" fill="#ff0000"/><circle cx="31.7" cy="22.5" r="2.0" fill="#ff0000"/></svg></div>
<div class="tb" style="left:47px;top:164px;width:41px;height:40px"><svg style="left:0px;top:-1px" width="41" height="40" viewBox="0 0 41 40"><path d="M8 20.9L32.3 7.3M17.3 31.7L18.7 26.5L21.5 21.6L26.1 18.5L31.7 17.7" stroke="#111" stroke-width="1.1" fill="none"/><circle cx="8" cy="20.9" r="2.0" fill="#ff0000"/><circle cx="14" cy="17.7" r="2.0" fill="#ff0000"/><circle cx="20" cy="14.3" r="2.0" fill="#ff0000"/><circle cx="26" cy="11" r="2.0" fill="#ff0000"/><circle cx="32.3" cy="7.3" r="2.0" fill="#ff0000"/><circle cx="17.3" cy="31.7" r="2.0" fill="#ff0000"/><circle cx="18.7" cy="26.5" r="2.0" fill="#ff0000"/><circle cx="21.5" cy="21.6" r="2.0" fill="#ff0000"/><circle cx="26.1" cy="18.5" r="2.0" fill="#ff0000"/><circle cx="31.7" cy="17.7" r="2.0" fill="#ff0000"/></svg></div>
<div class="tb" style="left:8px;top:203px;width:40px;height:41px"><svg style="left:-1px;top:0px" width="40" height="41" viewBox="0 0 40 41"><path d="M9.9 8L21.5 21.5M21.5 21.5Q25 18 31.7 17.3M21.5 21.5Q18 25 17.4 31.7" stroke="#111" stroke-width="1.1" fill="none"/><path d="M17 18Q21.5 11 27 17" stroke="#777" stroke-width="0.8" fill="none"/><circle cx="21.5" cy="21.5" r="2.2" fill="#ff0000"/></svg></div>
<div class="tb" style="left:47px;top:203px;width:41px;height:41px"><svg style="left:0px;top:0px" width="41" height="41" viewBox="0 0 41 41"><circle cx="23.8" cy="16.8" r="7.7" stroke="#111" stroke-width="1.1" fill="none"/><path d="M8.5 29.4L17.3 13.4" stroke="#111" stroke-width="1.1" fill="none"/><circle cx="17.3" cy="13.4" r="2.2" fill="#ff0000"/></svg></div>
<div class="tb" style="left:8px;top:243px;width:40px;height:41px"><svg style="left:-1px;top:0px" width="40" height="41" viewBox="0 0 40 41"><path d="M7.1 20.9L31.7 8.2M16.9 31.6Q18 17 31.7 16.7" stroke="#111" stroke-width="1.1" fill="none"/><circle cx="19.5" cy="14.2" r="2.2" fill="#ff0000"/><circle cx="31.3" cy="31.4" r="2.1" fill="#ff0000"/></svg></div>
<div class="tb" style="left:47px;top:243px;width:41px;height:41px"><svg style="left:0px;top:0px" width="41" height="41" viewBox="0 0 41 41"><circle cx="19.9" cy="19.8" r="11.4" stroke="#111" stroke-width="1.1" fill="none"/><circle cx="19.9" cy="19.8" r="2.2" fill="#ff0000"/><circle cx="19.9" cy="8.4" r="2.2" fill="#ff0000"/><circle cx="19.9" cy="31.2" r="2.2" fill="#ff0000"/><circle cx="8.5" cy="19.8" r="2.2" fill="#ff0000"/><circle cx="31.3" cy="19.8" r="2.2" fill="#ff0000"/></svg></div>
<div class="tb" style="left:8px;top:292px;width:40px;height:40px"><svg style="left:-1px;top:-1px" width="40" height="40" viewBox="0 0 40 40"><path d="M7.7 20.7L32.8 7.2M17.3 32.4Q18.5 17.5 32.4 17.3" stroke="#111" stroke-width="1.1" fill="none"/><circle cx="20" cy="14.1" r="2.2" fill="#ff0000"/><circle cx="21.7" cy="21.4" r="2.2" fill="#ff0000"/></svg></div>
<div class="tb" style="left:47px;top:292px;width:41px;height:40px"><svg style="left:0px;top:-1px" width="41" height="40" viewBox="0 0 41 40"><rect x="6.5" y="9.5" width="27" height="21" stroke="#000" stroke-width="1.2" fill="none"/><path d="M9 28L31.5 11.5" stroke="#999" stroke-width="0.7"/><circle cx="19.8" cy="20" r="2.2" fill="#ff0000"/></svg></div>
<div class="tb" style="left:8px;top:340px;width:40px;height:40px"><svg style="left:-1px;top:-1px" width="40" height="40" viewBox="0 0 40 40"><path d="M9 20.7L32.8 8M18 31.7Q19 18 32.8 17.3" stroke="#111" stroke-width="1.1" fill="none"/><path d="M7 13.5L12.5 11.5L11 15Z M22 31L24.5 26L26 30Z" fill="#111"/><circle cx="16.6" cy="16.2" r="2.2" fill="#ff0000"/><circle cx="21.1" cy="22.4" r="2.2" fill="#ff0000"/></svg></div>
<div class="tb" style="left:47px;top:340px;width:41px;height:40px"><svg style="left:0px;top:-1px" width="41" height="40" viewBox="0 0 41 40"><path d="M16.4 15.9L32.1 7.4" stroke="#111" stroke-width="1.1" stroke-dasharray="3 2"/><path d="M7 14L13 11.5L11.5 15.5Z" fill="#111"/><circle cx="16.4" cy="15.9" r="2.2" fill="#ff0000"/><circle cx="32.1" cy="7.4" r="1.6" fill="#111"/><circle cx="7.8" cy="20.7" r="1.6" fill="#111"/><text x="5.5" y="33.7" font-size="12" font-family="Liberation Sans" fill="#111">1</text><text x="28.5" y="22.8" font-size="12" font-family="Liberation Sans" fill="#111">2</text></svg></div>
<div class="tb" style="left:8px;top:388px;width:40px;height:40px"><svg style="left:-1px;top:-1px" width="40" height="40" viewBox="0 0 40 40"><path d="M5.6 17L33.7 25.5M27.6 5.9L20.4 33.8" stroke="#111" stroke-width="1.1" fill="none"/><circle cx="23.4" cy="22.5" r="2.3" fill="#ff0000"/></svg></div>
<div class="tb" style="left:47px;top:388px;width:41px;height:40px"><svg style="left:0px;top:-1px" width="41" height="40" viewBox="0 0 41 40"><path d="M8.8 21.4L20.5 25.5M31.2 10.4L28 22.1" stroke="#111" stroke-width="1.1" fill="none"/><circle cx="26.7" cy="27.6" r="2.3" fill="#ff0000"/></svg></div>
<div class="tb" style="left:8px;top:484px;width:40px;height:40px"><svg style="left:-1px;top:-1px" width="40" height="40" viewBox="0 0 40 40"><path d="M16.1 6.5V24.4H34.6" stroke="#111" stroke-width="1.2" fill="none"/><circle cx="31.3" cy="8.5" r="2.1" fill="#ff0000"/><text x="6.5" y="14" font-size="12" font-family="Liberation Sans" fill="#111">y</text><text x="27.2" y="33.3" font-size="12" font-family="Liberation Sans" fill="#111">x</text></svg></div>
<div class="tb" style="left:47px;top:484px;width:41px;height:40px"><svg style="left:0px;top:-1px" width="41" height="40" viewBox="0 0 41 40"><path d="M6.5 30.4L25.6 11.4Q33 18 33.7 30.4Z" stroke="#111" stroke-width="1.2" fill="none"/><circle cx="25.6" cy="11.4" r="2.1" fill="#ff0000"/><text x="9.5" y="19.5" font-size="12" font-family="Liberation Sans" fill="#111">r</text><text x="21" y="26.5" font-size="12" font-family="Liberation Sans" fill="#111">a</text></svg></div>
<div class="tb" style="left:8px;top:532px;width:40px;height:40px"><svg style="left:-1px;top:-1px" width="40" height="40" viewBox="0 0 40 40"><path d="M10.7 10.7H29.2M10.7 10.7V29.2" stroke="#444" stroke-width="1" stroke-dasharray="1 1.5"/><circle cx="10.7" cy="10.7" r="2.6" fill="#ff0000"/><circle cx="29.2" cy="10.7" r="1.6" fill="#111"/><circle cx="10.7" cy="29.2" r="1.6" fill="#111"/><text x="26.5" y="22.6" font-size="12" font-family="Liberation Sans" fill="#111">2</text><text x="15" y="32" font-size="12" font-family="Liberation Sans" fill="#111">1</text></svg></div>
<div class="tb" style="left:47px;top:532px;width:41px;height:40px"><svg style="left:0px;top:-1px" width="41" height="40" viewBox="0 0 41 40"><path d="M28.8 10.7V29.2M10.3 29.2H28.8" stroke="#444" stroke-width="1" stroke-dasharray="1 1.5"/><circle cx="28.8" cy="29.2" r="2.6" fill="#ff0000"/><circle cx="28.8" cy="10.7" r="1.6" fill="#111"/><circle cx="10.3" cy="29.2" r="1.6" fill="#111"/><text x="20.3" y="16.3" font-size="12" font-family="Liberation Sans" fill="#111">2</text><text x="8" y="24.5" font-size="12" font-family="Liberation Sans" fill="#111">1</text></svg></div>
<div class="tb" style="left:8px;top:580px;width:40px;height:40px"><svg style="left:-1px;top:-1px" width="40" height="40" viewBox="0 0 40 40"><g stroke="#f4a0a0" stroke-width="0.9" fill="none"><path d="M7.4 25.7V13Q7.4 9.4 11 9.4H32.8V31H13.5V25.7Z"/><circle cx="15" cy="17" r="3.6"/><path d="M32 13L23.5 23H32Z"/></g><circle cx="19.9" cy="20" r="2.2" fill="#ff0000"/></svg></div>
<div class="tbp" style="left:8px;top:628px;width:40px;height:40px"><svg style="left:-1px;top:-1px" width="40" height="40" viewBox="0 0 40 40"><path d="M15 19.5h9M19.5 15v9" stroke="#000" stroke-width="1.1"/></svg></div>
<div class="tb" style="left:47px;top:628px;width:41px;height:40px"><svg style="left:0px;top:-1px" width="41" height="40" viewBox="0 0 41 40"><path d="M6 19.5H33M19.4 6V32.8" stroke="#000" stroke-width="1.2"/><g stroke="#ff0000" stroke-width="1" fill="none"><circle cx="19.4" cy="19.5" r="4"/><path d="M15.399999999999999 19.5h8M19.4 15.5v8"/></g></svg></div>
<div class="tb" style="left:8px;top:667px;width:40px;height:41px"><svg style="left:-1px;top:-1px" width="40" height="41" viewBox="0 0 40 41"><path d="M6.2 20.6H32.9" stroke="#000" stroke-width="1.2"/><g stroke="#ff0000" stroke-width="1" fill="none"><circle cx="19.5" cy="20.6" r="4"/><path d="M15.5 20.6h8M19.5 16.6v8"/></g></svg></div>
<div class="tb" style="left:47px;top:667px;width:41px;height:41px"><svg style="left:0px;top:-1px" width="41" height="41" viewBox="0 0 41 41"><path d="M19.4 7.2V33.9" stroke="#000" stroke-width="1.2"/><g stroke="#ff0000" stroke-width="1" fill="none"><circle cx="19.4" cy="20.6" r="4"/><path d="M15.399999999999999 20.6h8M19.4 16.6v8"/></g></svg></div>
<div class="tb" style="left:8px;top:707px;width:40px;height:41px"><svg style="left:-1px;top:-1px" width="40" height="41" viewBox="0 0 40 41"><path d="M10.5 6v5M15 7.5l-1 5M20.5 9.5l-2 4.5M25.5 13l-3 4M31 19.5l-4.5 1.2M30 23.5l-5 1M30 30h-5.5" stroke="#777" stroke-width="0.9"/><path d="M9.4 31.5L30.6 19.4" stroke="#000" stroke-width="1.1"/><g stroke="#ff0000" stroke-width="1" fill="none"><circle cx="9.4" cy="31.5" r="4"/><path d="M5.4 31.5h8M9.4 27.5v8"/></g></svg></div>
<div class="tb" style="left:8px;top:756px;width:40px;height:40px"><svg style="left:-1px;top:-1px" width="40" height="40" viewBox="0 0 40 40"><g stroke="#ff0000" stroke-width="1" fill="none"><circle cx="16.4" cy="13.7" r="4"/><path d="M12.399999999999999 13.7h8M16.4 9.7v8"/></g><path d="M17.6 16.2V29L20.5 26.3L23 31.5L25 30.6L22.6 25.5H26.7Z" fill="#fff" stroke="#777" stroke-width="0.9" stroke-linejoin="round"/></svg></div>
<div class="tb" style="left:47px;top:756px;width:41px;height:40px"><svg style="left:0px;top:-1px" width="41" height="40" viewBox="0 0 41 40"><ellipse cx="12" cy="14.3" rx="3.3" ry="4.6" stroke="#000" stroke-width="1.8" fill="none"/><path d="M15.3 12.8H29.8V18.5H27.2V15.8H25.5V17.5H23.5V15.8H15.3Z" fill="#000"/><g stroke="#ff0000" stroke-width="1" fill="none"><circle cx="19.4" cy="28.7" r="4"/><path d="M15.399999999999999 28.7h8M19.4 24.7v8"/></g></svg></div>
<div class="tbp" style="left:8px;top:436px;width:40px;height:40px;background:#c4c4c4"></div>
<div class="t" style="left:13.8px;top:449.5px;font-size:13px;color:#111;letter-spacing:-0.2px">Auto</div>
<div class="a" style="left:1374px;top:120px;width:14px;height:1084px;background:#e2e2e2;border-left:1px solid #bcbcbc"></div><div class="a" style="left:1375px;top:120px;width:13px;height:13px;background:linear-gradient(90deg,#fdfdfd,#efefef)"></div><div class="a" style="left:1375px;top:1191px;width:13px;height:13px;background:linear-gradient(90deg,#fdfdfd,#efefef)"></div><div class="a" style="left:1374px;top:337px;width:14px;height:603px;background:linear-gradient(90deg,#fdfdfd,#eeeeee);border:1px solid #bcbcbc;border-right:0"></div><svg style="left:1374px;top:120px" width="14" height="1084"><path d="M3.5 8.5L7.5 4.5L11.5 8.5Z" fill="#555"/><path d="M3.5 1075.5L7.5 1079.5L11.5 1075.5Z" fill="#555"/></svg>
<div class="a" style="left:117px;top:1204px;width:1206px;height:14px;background:#e2e2e2;border-top:1px solid #bcbcbc"></div><div class="a" style="left:117px;top:1205px;width:13px;height:13px;background:linear-gradient(#fdfdfd,#efefef)"></div><div class="a" style="left:1310px;top:1205px;width:13px;height:13px;background:linear-gradient(#fdfdfd,#efefef)"></div><div class="a" style="left:405px;top:1204px;width:607px;height:14px;background:linear-gradient(#fdfdfd,#eeeeee);border:1px solid #bcbcbc;border-bottom:0"></div><svg style="left:117px;top:1204px" width="1206" height="14"><path d="M8.5 3.5L4.5 7.5L8.5 11.5Z" fill="#555"/><path d="M1197.5 3.5L1201.5 7.5L1197.5 11.5Z" fill="#555"/></svg>
<div class="a" style="left:92px;top:1204px;width:25px;height:14px;background:#efefef"></div>
<div class="t" style="left:1343px;top:1205px;color:#111;letter-spacing:-0.3px">10 &lt; 100</div>
<svg style="left:733px;top:1220px" width="16" height="3"><rect x="1.0" y="1" width="1" height="1" fill="#b4b4b4"/><rect x="3.5" y="1" width="1" height="1" fill="#b4b4b4"/><rect x="6.0" y="1" width="1" height="1" fill="#b4b4b4"/><rect x="8.5" y="1" width="1" height="1" fill="#b4b4b4"/><rect x="11.0" y="1" width="1" height="1" fill="#b4b4b4"/><rect x="13.5" y="1" width="1" height="1" fill="#b4b4b4"/></svg>
<div class="a" style="left:92px;top:1226px;width:1296px;height:98px;background:#fff;border:1px solid #bdbdbd;border-right:0"></div>
<div class="a" style="left:93px;top:1227px;width:1280px;height:96px;overflow:hidden"><div class="t" style="left:4px;top:-8px;color:#1a1a1a">[18:16:21] Autosaving to: /home/nailxx/Dropbox/Figuro/texts/qcad-editing-basics/~Дно_10мм.dxf...</div><div class="t" style="left:4px;top:9px;color:#1a1a1a">[18:16:22] Autosave complete.</div><div class="t" style="left:4px;top:43px;color:#1a1a1a">[18:21:21] Autosaving to: /home/nailxx/Dropbox/Figuro/texts/qcad-editing-basics/~Дно_10мм.dxf...</div><div class="t" style="left:4px;top:60px;color:#1a1a1a">[18:21:22] Autosave complete.</div><div class="t" style="left:4px;top:26px;color:#1a1acc"><i style="letter-spacing:-0.35px">Command:</i>&#8201;move</div><div class="t" style="left:4px;top:77px;color:#1a1acc"><i style="letter-spacing:-0.35px">Command:</i>&#8201;move</div></div>
<div class="a" style="left:1373px;top:1227px;width:14px;height:96px;background:#e2e2e2;border-left:1px solid #bcbcbc"></div><div class="a" style="left:1374px;top:1227px;width:13px;height:13px;background:linear-gradient(90deg,#fdfdfd,#efefef)"></div><div class="a" style="left:1374px;top:1310px;width:13px;height:13px;background:linear-gradient(90deg,#fdfdfd,#efefef)"></div><div class="a" style="left:1373px;top:1241px;width:14px;height:41px;background:linear-gradient(90deg,#fdfdfd,#eeeeee);border:1px solid #bcbcbc;border-right:0"></div><svg style="left:1373px;top:1227px" width="14" height="96"><path d="M3.5 8.5L7.5 4.5L11.5 8.5Z" fill="#555"/><path d="M3.5 87.5L7.5 91.5L11.5 87.5Z" fill="#555"/></svg>
<div class="a" style="left:1374px;top:1241px;width:14px;height:41px;background:#e2e2e2"></div>
<div class="a" style="left:1373px;top:1282px;width:15px;height:28px;background:linear-gradient(90deg,#fdfdfd,#eeeeee);border:1px solid #bcbcbc;border-right:0"></div>
<div class="a" style="left:92px;top:1324px;width:1296px;height:26px;background:#efefef;border-left:1px solid #bdbdbd;border-bottom:1px solid #bdbdbd"></div>
<div class="a" style="left:164px;top:1328px;width:1206px;height:19px;background:#fff"></div>
<div class="t" style="left:93px;top:1331px;color:#1a1a1a">Target point:</div>
<div class="btn" style="left:1364px;top:1326px;width:22px;height:22px"><svg style="left:2px;top:3px" width="16" height="14"><rect x="1.5" y="2.5" width="13" height="9" fill="#fff" stroke="#111" stroke-width="1"/><rect x="1.5" y="2" width="13" height="2.5" fill="#111"/></svg></div>
<div class="t" style="left:6px;top:1357px;color:#1a1a1a">225,-90</div>
<div class="t" style="left:6px;top:1377px;color:#1a1a1a">@0,30</div>
<div class="a" style="left:290px;top:1353px;width:1px;height:40px;background:#b8b8b8"></div>
<div class="t" style="left:294px;top:1357px;color:#1a1a1a">242.3324&lt;338°</div>
<div class="t" style="left:294px;top:1377px;color:#1a1a1a">@30&lt;90°</div>
<div class="a" style="left:579px;top:1365px;width:1px;height:17px;border-left:1px dotted #b8b8b8"></div>
<div class="t" style="left:737.5px;top:1367px;color:#1a1a1a">Target point</div>
<svg style="left:814px;top:1355px" width="22" height="33"><rect x="2" y="1.5" width="18" height="30" rx="9" ry="9" fill="#fff" stroke="#333" stroke-width="1"/><path d="M2 14H20M11 1.5V14" stroke="#333" stroke-width="1"/><rect x="9.2" y="4" width="3.6" height="6.5" rx="1.8" fill="#fff" stroke="#333" stroke-width="0.9"/></svg>
<div class="t" style="left:849px;top:1367px;color:#1a1a1a">Back</div>
<div class="a" style="left:1072px;top:1362px;width:1px;height:28px;border-left:1px dotted #b8b8b8"></div>
<div class="t" style="left:1075.5px;top:1358px;color:#1a1a1a">Selected entities:</div>
<div class="t" style="left:1075.5px;top:1374.5px;color:#1a1a1a;letter-spacing:-0.15px">1 Block Reference on Layer "0".</div>
<div class="a" style="left:1443px;top:1365px;width:1px;height:17px;border-left:1px dotted #b8b8b8"></div>
<svg style="left:1697px;top:1382px" width="12" height="12"><rect x="10" y="10" width="1" height="1" fill="#b0b0b0"/><rect x="10" y="7" width="1" height="1" fill="#b0b0b0"/><rect x="10" y="4" width="1" height="1" fill="#b0b0b0"/><rect x="10" y="1" width="1" height="1" fill="#b0b0b0"/><rect x="7" y="10" width="1" height="1" fill="#b0b0b0"/><rect x="7" y="7" width="1" height="1" fill="#b0b0b0"/><rect x="7" y="4" width="1" height="1" fill="#b0b0b0"/><rect x="4" y="10" width="1" height="1" fill="#b0b0b0"/><rect x="4" y="7" width="1" height="1" fill="#b0b0b0"/><rect x="1" y="10" width="1" height="1" fill="#b0b0b0"/></svg>
<div class="a" style="left:1673px;top:63px;width:37px;height:1287px;background:linear-gradient(90deg,#f7f7f7,#ececec);border-left:1px solid #c4c4c4"></div>
<svg style="left:1684px;top:67px" width="18" height="6"><rect x="1" y="1" width="1" height="1" fill="#b0b0b0"/><rect x="1" y="4" width="1" height="1" fill="#b0b0b0"/><rect x="4" y="1" width="1" height="1" fill="#b0b0b0"/><rect x="4" y="4" width="1" height="1" fill="#b0b0b0"/><rect x="7" y="1" width="1" height="1" fill="#b0b0b0"/><rect x="7" y="4" width="1" height="1" fill="#b0b0b0"/><rect x="10" y="1" width="1" height="1" fill="#b0b0b0"/><rect x="10" y="4" width="1" height="1" fill="#b0b0b0"/><rect x="13" y="1" width="1" height="1" fill="#b0b0b0"/><rect x="13" y="4" width="1" height="1" fill="#b0b0b0"/><rect x="16" y="1" width="1" height="1" fill="#b0b0b0"/><rect x="16" y="4" width="1" height="1" fill="#b0b0b0"/></svg>
<div class="a" style="left:1677px;top:76px;width:29px;height:29px;background:radial-gradient(ellipse at center,#f4f4f4 45%,#c8c8c8 80%,#9c9c9c);border:1px solid #6a6a6a"><svg style="left:0;top:0" width="29" height="29" overflow="visible"><rect x="3.5" y="3.5" width="21" height="21.5" fill="#fff" stroke="#8a8a8a" stroke-width="1" rx="1.5"/><rect x="3.5" y="3.5" width="21" height="3.2" fill="#000"/><rect x="4.5" y="4.3" width="1.6" height="1.6" fill="#fff"/><path d="M5 22.5H23" stroke="#bbb" stroke-width="1"/><path d="M9.5 20L11 12L16.5 9.5L15 17.5Z" fill="#ccc" stroke="#666" stroke-width="0.7"/><path d="M13 19L14.5 11.5L20 9.5L18.5 17Z" fill="#f6c0c0" stroke="#d06060" stroke-width="0.7"/></svg></div>
<div class="a" style="left:1677px;top:106px;width:29px;height:29px;background:radial-gradient(ellipse at center,#f4f4f4 45%,#c8c8c8 80%,#9c9c9c);border:1px solid #6a6a6a"><svg style="left:0;top:0" width="29" height="29" overflow="visible"><rect x="3.5" y="3.5" width="21" height="21.5" fill="#fff" stroke="#8a8a8a" stroke-width="1" rx="1.5"/><rect x="3.5" y="3.5" width="21" height="3.2" fill="#000"/><rect x="4.5" y="4.3" width="1.6" height="1.6" fill="#fff"/><path d="M5 22.5H23" stroke="#bbb" stroke-width="1"/><rect x="9.5" y="11" width="8" height="6.5" fill="#f6e6b0" stroke="#a08040" stroke-width="0.7"/><circle cx="16.5" cy="16.5" r="3.3" fill="#f6e6b0" stroke="#a08040" stroke-width="0.7"/></svg></div>
<div class="a" style="left:1683px;top:139px;width:17px;height:1px;background:#d0d0d0"></div>
<div class="a" style="left:1677px;top:143px;width:29px;height:29px;background:radial-gradient(ellipse at center,#f4f4f4 45%,#c8c8c8 80%,#9c9c9c);border:1px solid #6a6a6a"><svg style="left:0;top:0" width="29" height="29" overflow="visible"><rect x="3.5" y="3.5" width="21" height="21.5" fill="#fff" stroke="#8a8a8a" stroke-width="1" rx="1.5"/><rect x="3.5" y="3.5" width="21" height="3.2" fill="#000"/><rect x="4.5" y="4.3" width="1.6" height="1.6" fill="#fff"/><path d="M5 22.5H23" stroke="#bbb" stroke-width="1"/><rect x="6.5" y="10" width="3" height="2.2" fill="#000"/><rect x="6.5" y="13.8" width="3" height="2.2" fill="#000"/><rect x="6.5" y="17.6" width="3" height="2.2" fill="#000"/><rect x="11.5" y="9.5" width="10" height="3" fill="#ddd" stroke="#888" stroke-width="0.5"/><rect x="11.5" y="13.3" width="10" height="3" fill="#fff" stroke="#888" stroke-width="0.5"/><rect x="11.5" y="17.1" width="10" height="3" fill="#ddd" stroke="#888" stroke-width="0.5"/></svg></div>
<div class="a" style="left:1677px;top:173px;width:29px;height:29px;"><svg style="left:0;top:0" width="29" height="29" overflow="visible"><rect x="3.5" y="3.5" width="21" height="21" fill="#fff" stroke="#999" stroke-width="1" rx="1"/><rect x="3" y="3" width="22" height="3.5" fill="#000"/><rect x="4" y="4" width="1.5" height="1.5" fill="#fff"/><path d="M5 14H23" stroke="#e88" stroke-width="0.5"/><path d="M8 10L10 17V10Z" fill="none" stroke="#333" stroke-width="0.7"/><rect x="11" y="11.5" width="7" height="5" fill="#666"/></svg></div>
<div class="a" style="left:1683px;top:206px;width:17px;height:1px;background:#d0d0d0"></div>
<div class="a" style="left:1677px;top:210px;width:29px;height:29px;background:radial-gradient(ellipse at center,#f4f4f4 45%,#c8c8c8 80%,#9c9c9c);border:1px solid #6a6a6a"><svg style="left:0;top:0" width="29" height="29" overflow="visible"><rect x="3.5" y="3.5" width="21" height="21.5" fill="#fff" stroke="#8a8a8a" stroke-width="1" rx="1.5"/><rect x="3.5" y="3.5" width="21" height="3.2" fill="#000"/><rect x="4.5" y="4.3" width="1.6" height="1.6" fill="#fff"/><path d="M5 22.5H23" stroke="#bbb" stroke-width="1"/><path d="M6 10h7M6 12.5h6M6 15h7M6 17.5h6" stroke="#aaa" stroke-width="0.7"/><rect x="5" y="20" width="18" height="2.5" fill="#eee" stroke="#777" stroke-width="0.5"/></svg></div>
<svg style="left:1390px;top:699px" width="3" height="18"><rect x="1" y="1" width="1" height="1" fill="#a8a8a8"/><rect x="1" y="4" width="1" height="1" fill="#a8a8a8"/><rect x="1" y="7" width="1" height="1" fill="#a8a8a8"/><rect x="1" y="10" width="1" height="1" fill="#a8a8a8"/><rect x="1" y="13" width="1" height="1" fill="#a8a8a8"/><rect x="1" y="16" width="1" height="1" fill="#a8a8a8"/></svg>
<div class="t" style="left:1398px;top:66px;color:#1a1a1a;letter-spacing:-0.15px">Block List</div>
<svg style="left:1646px;top:67px" width="27" height="12"><rect x="0.5" y="0.5" width="11" height="11" rx="2" fill="none" stroke="#555" stroke-width="1"/><rect x="4.5" y="2.5" width="5" height="5" fill="none" stroke="#555" stroke-width="1"/><rect x="2.5" y="4.5" width="5" height="5" fill="#efefef" stroke="#555" stroke-width="1"/><rect x="14.5" y="0.5" width="11" height="11" rx="2" fill="none" stroke="#555" stroke-width="1"/><path d="M17 3L23 9M23 3L17 9" stroke="#222" stroke-width="2"/></svg>
<div class="btn" style="left:1394px;top:82px;width:36px;height:23px;border-color:#b4b4b4"><svg style="left:-1px;top:-1px" width="36" height="23"><g transform="translate(17 11) scale(1.0)"><path d="M-8 0.5Q-4.5 -6.5 0 -6Q4.5 -6.5 8 0.5Q4.5 6.2 0 5.8Q-4.5 6.2 -8 0.5Z" fill="#000"/><path d="M-5.3 1.2Q-3 -2.6 0 -2.6Q3 -2.6 5.3 1.2Q3 3.6 0 3.6Q-3 3.6 -5.3 1.2Z" fill="#fff"/><circle cx="0" cy="0.2" r="3" fill="#000"/><path d="M-1.4 -0.9Q-0.4 -2 0.8 -1.6" stroke="#fff" stroke-width="0.7" fill="none"/></g></svg></div>
<div class="btn" style="left:1429px;top:82px;width:36px;height:23px;border-color:#b4b4b4"><svg style="left:-1px;top:-1px" width="36" height="23"><g transform="translate(17 11) scale(1.0)"><path d="M-8 0.5Q-4.5 -6.5 0 -6Q4.5 -6.5 8 0.5Q4.5 6.2 0 5.8Q-4.5 6.2 -8 0.5Z" fill="#aaa"/><path d="M-5.3 1.2Q-3 -2.6 0 -2.6Q3 -2.6 5.3 1.2Q3 3.6 0 3.6Q-3 3.6 -5.3 1.2Z" fill="#fff"/><circle cx="0" cy="0.2" r="3" fill="#aaa"/><path d="M-1.4 -0.9Q-0.4 -2 0.8 -1.6" stroke="#fff" stroke-width="0.7" fill="none"/></g></svg></div>
<div class="btn" style="left:1464px;top:82px;width:36px;height:23px;border-color:#b4b4b4"><svg style="left:-1px;top:-1px" width="36" height="23"><path d="M11.5 11H22.5M17 5.5V16.5" stroke="#e00" stroke-width="3"/></svg></div>
<div class="btn" style="left:1499px;top:82px;width:36px;height:23px;border-color:#b4b4b4"><svg style="left:-1px;top:-1px" width="36" height="23"><path d="M11.5 11H22.5" stroke="#999" stroke-width="3"/></svg></div>
<div class="btn" style="left:1534px;top:82px;width:35px;height:23px;border-color:#b4b4b4"><svg style="left:-1px;top:-1px" width="35" height="23"><text x="9" y="15.5" font-family="Liberation Sans" font-size="12" fill="#888">a|b</text></svg></div>
<div class="btn" style="left:1568px;top:82px;width:36px;height:23px;border-color:#b4b4b4"><svg style="left:-1px;top:-1px" width="36" height="23"><g transform="translate(9.5 3.5) scale(1.05)"><path d="M0.5 14.5L1.8 10.8L12 0.6L14.4 3L4.2 13.2Z" fill="#e8b040" stroke="#9a6a20" stroke-width="0.6"/><path d="M12 0.6L14.4 3L13.2 4.2L10.8 1.8Z" fill="#e02828"/><path d="M0.5 14.5L1.8 10.8L4.2 13.2Z" fill="#6a6a6a"/></g></svg></div>
<div class="btn" style="left:1603px;top:82px;width:36px;height:23px;border-color:#b4b4b4"><svg style="left:-1px;top:-1px" width="36" height="23"><path d="M15 5h5v9l2-2v3l-4.5 3.5L13 15v-3l2 2Z" fill="#ddd" stroke="#aaa" stroke-width="0.7"/></svg></div>
<div class="btn" style="left:1638px;top:82px;width:35px;height:23px;border-color:#b4b4b4"><svg style="left:-1px;top:-1px" width="35" height="23"><rect x="12" y="6" width="10.5" height="10.5" fill="#e87050" stroke="#c85a40" stroke-width="1"/><path d="M14.5 8.5L20 14M20 8.5L14.5 14" stroke="#fff" stroke-width="1.6"/></svg></div>
<div class="a" style="left:1394px;top:104px;width:279px;height:299px;background:#fff;border:1px solid #bdbdbd"></div>
<div class="t" style="left:1442px;top:109.3px;color:#111;letter-spacing:-0.3px">*Model_Space</div>
<div class="t" style="left:1442px;top:127.3px;color:#111;letter-spacing:-0.3px">inner</div>
<div class="t" style="left:1442px;top:145.3px;color:#111;letter-spacing:-0.3px">outer_d8</div>
<div class="t" style="left:1442px;top:163.3px;color:#111;letter-spacing:-0.3px">outer_d10</div>
<div class="t" style="left:1442px;top:181.3px;color:#111;letter-spacing:-0.3px">*Paper_Space</div>
<div class="t" style="left:1442px;top:199.3px;color:#111;letter-spacing:-0.3px">*Paper_Space0</div>
<svg style="left:0;top:0" width="1714" height="1399"><g transform="translate(1406 115.5) scale(1.0)"><path d="M-8 0.5Q-4.5 -6.5 0 -6Q4.5 -6.5 8 0.5Q4.5 6.2 0 5.8Q-4.5 6.2 -8 0.5Z" fill="#000"/><path d="M-5.3 1.2Q-3 -2.6 0 -2.6Q3 -2.6 5.3 1.2Q3 3.6 0 3.6Q-3 3.6 -5.3 1.2Z" fill="#fff"/><circle cx="0" cy="0.2" r="3" fill="#000"/><path d="M-1.4 -0.9Q-0.4 -2 0.8 -1.6" stroke="#fff" stroke-width="0.7" fill="none"/></g><g transform="translate(1406 133.5) scale(1.0)"><path d="M-8 0.5Q-4.5 -6.5 0 -6Q4.5 -6.5 8 0.5Q4.5 6.2 0 5.8Q-4.5 6.2 -8 0.5Z" fill="#000"/><path d="M-5.3 1.2Q-3 -2.6 0 -2.6Q3 -2.6 5.3 1.2Q3 3.6 0 3.6Q-3 3.6 -5.3 1.2Z" fill="#fff"/><circle cx="0" cy="0.2" r="3" fill="#000"/><path d="M-1.4 -0.9Q-0.4 -2 0.8 -1.6" stroke="#fff" stroke-width="0.7" fill="none"/></g><g transform="translate(1406 151.5) scale(1.0)"><path d="M-8 0.5Q-4.5 -6.5 0 -6Q4.5 -6.5 8 0.5Q4.5 6.2 0 5.8Q-4.5 6.2 -8 0.5Z" fill="#000"/><path d="M-5.3 1.2Q-3 -2.6 0 -2.6Q3 -2.6 5.3 1.2Q3 3.6 0 3.6Q-3 3.6 -5.3 1.2Z" fill="#fff"/><circle cx="0" cy="0.2" r="3" fill="#000"/><path d="M-1.4 -0.9Q-0.4 -2 0.8 -1.6" stroke="#fff" stroke-width="0.7" fill="none"/></g><g transform="translate(1406 169.5) scale(1.0)"><path d="M-8 0.5Q-4.5 -6.5 0 -6Q4.5 -6.5 8 0.5Q4.5 6.2 0 5.8Q-4.5 6.2 -8 0.5Z" fill="#000"/><path d="M-5.3 1.2Q-3 -2.6 0 -2.6Q3 -2.6 5.3 1.2Q3 3.6 0 3.6Q-3 3.6 -5.3 1.2Z" fill="#fff"/><circle cx="0" cy="0.2" r="3" fill="#000"/><path d="M-1.4 -0.9Q-0.4 -2 0.8 -1.6" stroke="#fff" stroke-width="0.7" fill="none"/></g><g transform="translate(1406 187.5) scale(1.0)"><path d="M-8 0.5Q-4.5 -6.5 0 -6Q4.5 -6.5 8 0.5Q4.5 6.2 0 5.8Q-4.5 6.2 -8 0.5Z" fill="#000"/><path d="M-5.3 1.2Q-3 -2.6 0 -2.6Q3 -2.6 5.3 1.2Q3 3.6 0 3.6Q-3 3.6 -5.3 1.2Z" fill="#fff"/><circle cx="0" cy="0.2" r="3" fill="#000"/><path d="M-1.4 -0.9Q-0.4 -2 0.8 -1.6" stroke="#fff" stroke-width="0.7" fill="none"/></g><g transform="translate(1406 205.5) scale(1.0)"><path d="M-8 0.5Q-4.5 -6.5 0 -6Q4.5 -6.5 8 0.5Q4.5 6.2 0 5.8Q-4.5 6.2 -8 0.5Z" fill="#000"/><path d="M-5.3 1.2Q-3 -2.6 0 -2.6Q3 -2.6 5.3 1.2Q3 3.6 0 3.6Q-3 3.6 -5.3 1.2Z" fill="#fff"/><circle cx="0" cy="0.2" r="3" fill="#000"/><path d="M-1.4 -0.9Q-0.4 -2 0.8 -1.6" stroke="#fff" stroke-width="0.7" fill="none"/></g><g transform="translate(1421 108) scale(1.0)"><path d="M0.5 14.5L1.8 10.8L12 0.6L14.4 3L4.2 13.2Z" fill="#e8b040" stroke="#9a6a20" stroke-width="0.6"/><path d="M12 0.6L14.4 3L13.2 4.2L10.8 1.8Z" fill="#e02828"/><path d="M0.5 14.5L1.8 10.8L4.2 13.2Z" fill="#6a6a6a"/></g></svg>
<svg style="left:1526px;top:404px" width="18" height="3"><rect x="1.0" y="1" width="1" height="1" fill="#b4b4b4"/><rect x="3.8" y="1" width="1" height="1" fill="#b4b4b4"/><rect x="6.6" y="1" width="1" height="1" fill="#b4b4b4"/><rect x="9.4" y="1" width="1" height="1" fill="#b4b4b4"/><rect x="12.2" y="1" width="1" height="1" fill="#b4b4b4"/><rect x="15.0" y="1" width="1" height="1" fill="#b4b4b4"/></svg>
<div class="t" style="left:1398px;top:412px;color:#1a1a1a;letter-spacing:-0.15px">Layer List</div>
<svg style="left:1646px;top:413px" width="27" height="12"><rect x="0.5" y="0.5" width="11" height="11" rx="2" fill="none" stroke="#555" stroke-width="1"/><rect x="4.5" y="2.5" width="5" height="5" fill="none" stroke="#555" stroke-width="1"/><rect x="2.5" y="4.5" width="5" height="5" fill="#efefef" stroke="#555" stroke-width="1"/><rect x="14.5" y="0.5" width="11" height="11" rx="2" fill="none" stroke="#555" stroke-width="1"/><path d="M17 3L23 9M23 3L17 9" stroke="#222" stroke-width="2"/></svg>
<div class="btn" style="left:1394px;top:428px;width:57px;height:23px;border-color:#b4b4b4"><svg style="left:-1px;top:-1px" width="57" height="23"><g transform="translate(28 11) scale(1.0)"><path d="M-8 0.5Q-4.5 -6.5 0 -6Q4.5 -6.5 8 0.5Q4.5 6.2 0 5.8Q-4.5 6.2 -8 0.5Z" fill="#000"/><path d="M-5.3 1.2Q-3 -2.6 0 -2.6Q3 -2.6 5.3 1.2Q3 3.6 0 3.6Q-3 3.6 -5.3 1.2Z" fill="#fff"/><circle cx="0" cy="0.2" r="3" fill="#000"/><path d="M-1.4 -0.9Q-0.4 -2 0.8 -1.6" stroke="#fff" stroke-width="0.7" fill="none"/></g></svg></div>
<div class="btn" style="left:1450px;top:428px;width:57px;height:23px;border-color:#b4b4b4"><svg style="left:-1px;top:-1px" width="57" height="23"><g transform="translate(28 11) scale(1.0)"><path d="M-8 0.5Q-4.5 -6.5 0 -6Q4.5 -6.5 8 0.5Q4.5 6.2 0 5.8Q-4.5 6.2 -8 0.5Z" fill="#aaa"/><path d="M-5.3 1.2Q-3 -2.6 0 -2.6Q3 -2.6 5.3 1.2Q3 3.6 0 3.6Q-3 3.6 -5.3 1.2Z" fill="#fff"/><circle cx="0" cy="0.2" r="3" fill="#aaa"/><path d="M-1.4 -0.9Q-0.4 -2 0.8 -1.6" stroke="#fff" stroke-width="0.7" fill="none"/></g></svg></div>
<div class="btn" style="left:1506px;top:428px;width:56px;height:23px;border-color:#b4b4b4"><svg style="left:-1px;top:-1px" width="56" height="23"><path d="M22.5 11H33.5M28 5.5V16.5" stroke="#e00" stroke-width="3"/></svg></div>
<div class="btn" style="left:1561px;top:428px;width:57px;height:23px;border-color:#b4b4b4"><svg style="left:-1px;top:-1px" width="57" height="23"><path d="M22.5 11H33.5" stroke="#e00" stroke-width="3"/></svg></div>
<div class="btn" style="left:1617px;top:428px;width:56px;height:23px;border-color:#b4b4b4"><svg style="left:-1px;top:-1px" width="56" height="23"><g transform="translate(20 3.5) scale(1.05)"><path d="M0.5 14.5L1.8 10.8L12 0.6L14.4 3L4.2 13.2Z" fill="#e8b040" stroke="#9a6a20" stroke-width="0.6"/><path d="M12 0.6L14.4 3L13.2 4.2L10.8 1.8Z" fill="#e02828"/><path d="M0.5 14.5L1.8 10.8L4.2 13.2Z" fill="#6a6a6a"/></g></svg></div>
<div class="a" style="left:1394px;top:451px;width:279px;height:419px;background:#fff;border:1px solid #bdbdbd"></div>
<div class="a" style="left:1395px;top:452px;width:277px;height:19px;background:#308cc6"></div>
<svg style="left:0;top:0" width="1714" height="1399"><g transform="translate(1406 461.5) scale(1.0)"><path d="M-8 0.5Q-4.5 -6.5 0 -6Q4.5 -6.5 8 0.5Q4.5 6.2 0 5.8Q-4.5 6.2 -8 0.5Z" fill="#0c2236"/><path d="M-5.3 1.2Q-3 -2.6 0 -2.6Q3 -2.6 5.3 1.2Q3 3.6 0 3.6Q-3 3.6 -5.3 1.2Z" fill="#4a9ad0"/><circle cx="0" cy="0.2" r="3" fill="#0c2236"/><path d="M-1.4 -0.9Q-0.4 -2 0.8 -1.6" stroke="#4a9ad0" stroke-width="0.7" fill="none"/></g><path d="M1419.5 462V458.5Q1419.5 454 1423.5 454Q1427.5 454 1427.5 458.5V462" fill="none" stroke="#8aa4b8" stroke-width="1.6"/><rect x="1418" y="461" width="11" height="8" fill="#8aa4b8"/></svg>
<div class="t" style="left:1436px;top:455.5px;color:#fff">0</div>
<svg style="left:1526px;top:871px" width="18" height="3"><rect x="1.0" y="1" width="1" height="1" fill="#b4b4b4"/><rect x="3.8" y="1" width="1" height="1" fill="#b4b4b4"/><rect x="6.6" y="1" width="1" height="1" fill="#b4b4b4"/><rect x="9.4" y="1" width="1" height="1" fill="#b4b4b4"/><rect x="12.2" y="1" width="1" height="1" fill="#b4b4b4"/><rect x="15.0" y="1" width="1" height="1" fill="#b4b4b4"/></svg>
<div class="t" style="left:1398px;top:879px;color:#1a1a1a">Property Editor</div>
<svg style="left:1646px;top:880px" width="27" height="12"><rect x="0.5" y="0.5" width="11" height="11" rx="2" fill="none" stroke="#555" stroke-width="1"/><rect x="4.5" y="2.5" width="5" height="5" fill="none" stroke="#555" stroke-width="1"/><rect x="2.5" y="4.5" width="5" height="5" fill="#efefef" stroke="#555" stroke-width="1"/><rect x="14.5" y="0.5" width="11" height="11" rx="2" fill="none" stroke="#555" stroke-width="1"/><path d="M17 3L23 9M23 3L17 9" stroke="#222" stroke-width="2"/></svg>
<div class="a" style="left:1394px;top:895px;width:279px;height:455px;border:1px solid #bdbdbd;background:#efefef"></div>
<div class="a" style="left:1395px;top:896px;width:263px;height:453px;overflow:hidden">
<div class="t" style="left:9.5px;top:15.2px;color:#1a1a1a;letter-spacing:-0.2px">Selection:</div><div class="btn" style="left:67px;top:9px;width:187px;height:25px;border-color:#b8b8b8"><div class="t" style="left:4px;top:5px;color:#111;letter-spacing:-0.2px">Block Reference [1]</div><svg style="left:171px;top:8px" width="10" height="6"><path d="M1 1H9L5 5Z" fill="#555"/></svg></div><div class="t" style="left:9.3px;top:42.8px;color:#1a1a1a;letter-spacing:-0.1px">General Properties</div><div class="a" style="left:10px;top:61px;width:244px;height:203px;border:1px solid #d2d2d2;border-radius:2px;background:#ececec"></div><div class="t" style="left:-50.299999999999955px;top:74.70000000000005px;width:150px;text-align:right;color:#1a1a1a;letter-spacing:-0.2px">Layer:</div><div class="btn" style="left:106px;top:69px;width:136px;height:25px;border-color:#b8b8b8"><div class="a" style="left:5px;top:6px;width:16px;height:10px;border:1px solid #222;background:#fff"></div><div class="t" style="left:24px;top:5px;color:#111">0</div><svg style="left:120px;top:8px" width="10" height="6"><path d="M1 1H9L5 5Z" fill="#555"/></svg></div><div class="t" style="left:-50.299999999999955px;top:101.70000000000005px;width:150px;text-align:right;color:#1a1a1a;letter-spacing:-0.2px">Color:</div><div class="btn" style="left:106px;top:96px;width:136px;height:25px;border-color:#b8b8b8"><div class="a" style="left:5px;top:6px;width:16px;height:10px;border:1px solid #222;background:#fff"></div><div class="t" style="left:24px;top:5px;color:#111">By Layer</div><svg style="left:120px;top:8px" width="10" height="6"><path d="M1 1H9L5 5Z" fill="#555"/></svg></div><div class="t" style="left:-50.299999999999955px;top:128.70000000000005px;width:150px;text-align:right;color:#1a1a1a;letter-spacing:-0.2px">Lineweight:</div><div class="btn" style="left:106px;top:123px;width:136px;height:25px;border-color:#b8b8b8"><div class="a" style="left:5px;top:11px;width:16px;height:1px;background:#111"></div><div class="t" style="left:24px;top:5px;color:#111">By Layer</div><svg style="left:120px;top:8px" width="10" height="6"><path d="M1 1H9L5 5Z" fill="#555"/></svg></div><div class="t" style="left:-50.299999999999955px;top:155.70000000000005px;width:150px;text-align:right;color:#1a1a1a;letter-spacing:-0.2px">Linetype:</div><div class="btn" style="left:106px;top:150px;width:136px;height:25px;border-color:#b8b8b8"><div class="t" style="left:4px;top:5px;color:#111">By Layer</div><svg style="left:120px;top:8px" width="10" height="6"><path d="M1 1H9L5 5Z" fill="#555"/></svg></div><div class="t" style="left:-50.299999999999955px;top:182.70000000000005px;width:150px;text-align:right;color:#1a1a1a;letter-spacing:-0.2px">Linetype Scale:</div><div class="inp" style="left:106px;top:177px;width:136px;height:25px;border-color:#b8b8b8"><div class="t" style="left:2px;top:5px;color:#111">1</div></div><div class="t" style="left:-50.299999999999955px;top:209.70000000000005px;width:150px;text-align:right;color:#1a1a1a;letter-spacing:-0.2px">Draw Order:</div><div class="inp" style="left:106px;top:204px;width:136px;height:25px;border-color:#b8b8b8"><div class="t" style="left:2px;top:5px;color:#111">74</div></div><div class="t" style="left:-50.299999999999955px;top:236.70000000000005px;width:150px;text-align:right;color:#1a1a1a;letter-spacing:-0.2px">Handle:</div><div class="inp" style="left:106px;top:231px;width:136px;height:25px;border-color:#b8b8b8"><div class="t" style="left:2px;top:5px;color:#111"><span style="color:#aaa">0xac</span></div></div><div class="t" style="left:9.4px;top:274.2px;color:#1a1a1a;letter-spacing:-0.1px">Specific Properties</div><div class="a" style="left:10px;top:292px;width:244px;height:300px;border:1px solid #d2d2d2;border-radius:2px;background:#ececec"></div><div class="t" style="left:-44.799999999999955px;top:308.70000000000005px;width:160px;text-align:right;color:#1a1a1a;letter-spacing:-0.2px">Referenced Block:</div><div class="inp" style="left:118px;top:303px;width:124px;height:25px;border-color:#b8b8b8"><div class="t" style="left:2px;top:5px;color:#111">inner</div></div><div class="t" style="left:-44.799999999999955px;top:335.70000000000005px;width:160px;text-align:right;color:#1a1a1a;letter-spacing:-0.2px">Angle:</div><div class="inp" style="left:118px;top:330px;width:124px;height:25px;border-color:#b8b8b8"><div class="t" style="left:2px;top:5px;color:#111">0</div></div><div class="t" style="left:-44.799999999999955px;top:362.70000000000005px;width:160px;text-align:right;color:#1a1a1a;letter-spacing:-0.2px">Columns:</div><div class="inp" style="left:118px;top:357px;width:124px;height:25px;border-color:#b8b8b8"><div class="t" style="left:2px;top:5px;color:#111">1</div></div><div class="t" style="left:-44.799999999999955px;top:390.70000000000005px;width:160px;text-align:right;color:#1a1a1a;letter-spacing:-0.2px">Rows:</div><div class="inp" style="left:118px;top:385px;width:124px;height:25px;border-color:#b8b8b8"><div class="t" style="left:2px;top:5px;color:#111">1</div></div><div class="t" style="left:-44.799999999999955px;top:417.70000000000005px;width:160px;text-align:right;color:#1a1a1a;letter-spacing:-0.2px">Column Spacing:</div><div class="inp" style="left:118px;top:412px;width:124px;height:25px;border-color:#b8b8b8"><div class="t" style="left:2px;top:5px;color:#111">0</div></div><div class="t" style="left:-44.799999999999955px;top:444.70000000000005px;width:160px;text-align:right;color:#1a1a1a;letter-spacing:-0.2px">Row Spacing:</div><div class="inp" style="left:118px;top:439px;width:124px;height:25px;border-color:#b8b8b8"><div class="t" style="left:2px;top:5px;color:#111">0</div></div></div>
<div class="a" style="left:1658px;top:896px;width:14px;height:453px;background:#e2e2e2;border-left:1px solid #bcbcbc"></div><div class="a" style="left:1659px;top:896px;width:13px;height:13px;background:linear-gradient(90deg,#fdfdfd,#efefef)"></div><div class="a" style="left:1659px;top:1336px;width:13px;height:13px;background:linear-gradient(90deg,#fdfdfd,#efefef)"></div><div class="a" style="left:1658px;top:909px;width:14px;height:306px;background:linear-gradient(90deg,#fdfdfd,#eeeeee);border:1px solid #bcbcbc;border-right:0"></div><svg style="left:1658px;top:896px" width="14" height="453"><path d="M3.5 8.5L7.5 4.5L11.5 8.5Z" fill="#555"/><path d="M3.5 444.5L7.5 448.5L11.5 444.5Z" fill="#555"/></svg>
<svg style="left:8px;top:35px" width="6" height="18"><rect x="1" y="1" width="1" height="1" fill="#b0b0b0"/><rect x="1" y="4" width="1" height="1" fill="#b0b0b0"/><rect x="1" y="7" width="1" height="1" fill="#b0b0b0"/><rect x="1" y="10" width="1" height="1" fill="#b0b0b0"/><rect x="1" y="13" width="1" height="1" fill="#b0b0b0"/><rect x="1" y="16" width="1" height="1" fill="#b0b0b0"/><rect x="4" y="1" width="1" height="1" fill="#b0b0b0"/><rect x="4" y="4" width="1" height="1" fill="#b0b0b0"/><rect x="4" y="7" width="1" height="1" fill="#b0b0b0"/><rect x="4" y="10" width="1" height="1" fill="#b0b0b0"/><rect x="4" y="13" width="1" height="1" fill="#b0b0b0"/><rect x="4" y="16" width="1" height="1" fill="#b0b0b0"/></svg>
<div class="a" style="left:19px;top:32px;width:38px;height:25px;border:2px solid #8a8a8a;border-radius:6px;background:linear-gradient(#fbfbfb,#f0f0f0)"></div>
<svg style="left:19px;top:32px" width="38" height="25"><path d="M11.5 5.5V19.5H17.5L11.5 5.5Z" fill="#fff" stroke="#777" stroke-width="1.2"/><path d="M11.5 5.5L17 18" stroke="#111" stroke-width="1.4"/><path d="M21.5 5.5V19.5H27.5Z" fill="#fff" stroke="#f44" stroke-width="1.2"/><path d="M14 12.5H21" stroke="#77f" stroke-width="1.6"/><path d="M18.5 10.5L21 12.5L18.5 14.5Z" fill="#77f"/></svg>
<div class="a" style="left:62px;top:34px;width:1px;height:21px;background:#d8d8d8"></div>
</body></html>
